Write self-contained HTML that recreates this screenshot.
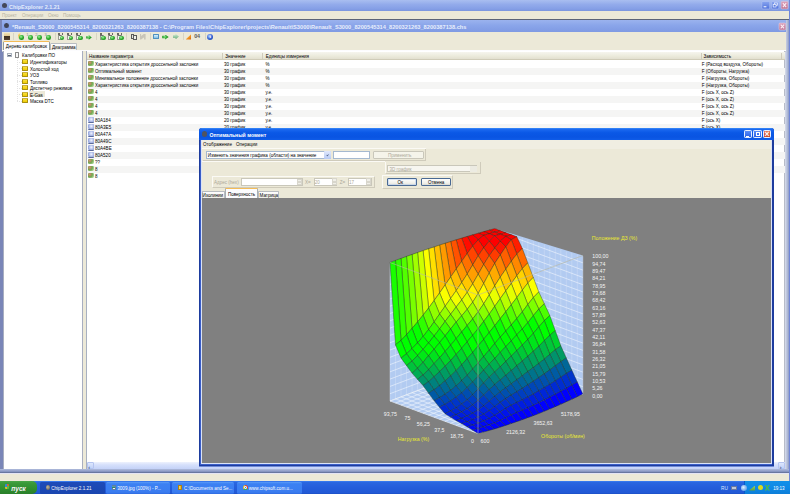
<!DOCTYPE html><html><head><meta charset="utf-8"><style>
html,body{margin:0;padding:0;}
body{width:790px;height:494px;overflow:hidden;position:relative;background:#ece9d8;font-family:"Liberation Sans",sans-serif;}
.t{position:absolute;white-space:pre;font-family:"Liberation Sans",sans-serif;}
div{box-sizing:border-box;}
</style></head><body>
<div style="position:absolute;left:0px;top:0px;width:790px;height:11px;background:linear-gradient(#a9bef0 0%,#93abeb 40%,#859fe6 80%,#7b96df 100%);"></div>
<div style="position:absolute;left:2px;top:3px;width:5px;height:5px;background:#44485a;border-radius:50%;"></div>
<div class="t" style="left:9px;top:3.53px;font-size:5.45px;line-height:6.54px;color:#e4ecfb;font-weight:bold;">ChipExplorer 2.1.21</div>
<svg style="position:absolute;left:0;top:0" width="790" height="40"><defs><linearGradient id="tb1" x1="0" y1="0" x2="0" y2="1"><stop offset="0" stop-color="#8aa6f0"/><stop offset="1" stop-color="#4f72dc"/></linearGradient><linearGradient id="tb2" x1="0" y1="0" x2="0" y2="1"><stop offset="0" stop-color="#dca2bc"/><stop offset="1" stop-color="#bf7494"/></linearGradient></defs><rect x="761.9" y="1.4" width="7.8" height="7.5" rx="1" fill="url(#tb1)" stroke="#b8c8f4" stroke-width="0.5"/><rect x="763.6" y="6.2" width="2.8" height="1.1" fill="#f0f4ff"/><rect x="771.7" y="1.4" width="7.2" height="7.5" rx="1" fill="url(#tb1)" stroke="#b8c8f4" stroke-width="0.5"/><rect x="774.6" y="2.9" width="2.8" height="2.4" fill="none" stroke="#f0f4ff" stroke-width="0.7"/><rect x="773.2" y="4.4" width="2.8" height="2.6" fill="#5a7ce0" stroke="#f0f4ff" stroke-width="0.7"/><rect x="781.1" y="1.4" width="6.9" height="7.5" rx="1" fill="url(#tb2)" stroke="#e4ccd8" stroke-width="0.5"/><path d="M782.9 3.2L786.2 7.1M786.2 3.2L782.9 7.1" stroke="#fbeef4" stroke-width="1.1"/></svg>
<div style="position:absolute;left:789px;top:0px;width:1px;height:494px;background:#6f86d8;"></div>
<div style="position:absolute;left:0px;top:11px;width:789px;height:7.6px;background:#ece9d8;"></div>
<div class="t" style="left:1.9px;top:12.87px;font-size:4.55px;line-height:5.46px;color:#b6b2a0;">Проект</div>
<div class="t" style="left:22px;top:12.87px;font-size:4.55px;line-height:5.46px;color:#b6b2a0;">Операции</div>
<div class="t" style="left:48px;top:12.87px;font-size:4.55px;line-height:5.46px;color:#b6b2a0;">Окно</div>
<div class="t" style="left:63px;top:12.87px;font-size:4.55px;line-height:5.46px;color:#b6b2a0;">Помощь</div>
<div style="position:absolute;left:0px;top:18.5px;width:789px;height:1.2px;background:#5c6478;"></div>
<div style="position:absolute;left:0px;top:19.6px;width:2.6px;height:454px;background:#7a86b8;"></div>
<div style="position:absolute;left:2.6px;top:51px;width:0.8px;height:418px;background:#dfe3f2;"></div>
<div style="position:absolute;left:785px;top:19.6px;width:4px;height:454px;background:linear-gradient(90deg,#d8deec,#b0bad6 60%,#8e9ac4);"></div>
<div style="position:absolute;left:2px;top:19.6px;width:784px;height:12px;background:linear-gradient(#9bb3ee 0%,#8aa5ea 45%,#7f9ae3 100%);"></div>
<div style="position:absolute;left:4.2px;top:22.6px;width:5px;height:5.5px;background:#404456;border-radius:50%;"></div>
<div class="t" style="left:12px;top:24.45px;font-size:5.66px;line-height:6.79px;color:#e8eefc;font-weight:bold;">*Renault_S3000_8200545314_8200321263_8200387138 - C:\Program Files\ChipExplorer\projects\Renault\S3000\Renault_S3000_8200545314_8200321263_8200387138.chs</div>
<svg style="position:absolute;left:0;top:0" width="790" height="40"><defs><linearGradient id="tb3" x1="0" y1="0" x2="0" y2="1"><stop offset="0" stop-color="#dca2bc"/><stop offset="1" stop-color="#bf7494"/></linearGradient></defs><rect x="779" y="23" width="6.8" height="7" rx="1" fill="url(#tb3)" stroke="#e8d4e0" stroke-width="0.5"/><path d="M780.7 24.7L784.1 28.3M784.1 24.7L780.7 28.3" stroke="#fbeef4" stroke-width="1.1"/></svg>
<div style="position:absolute;left:2px;top:31.6px;width:784px;height:9px;background:#ece9d8;"></div>
<div style="position:absolute;left:2px;top:40.6px;width:784px;height:10px;background:#ece9d8;"></div>
<div style="position:absolute;left:4.4px;top:33.4px;width:5.8px;height:6.4px;background:linear-gradient(#f2e2b0 0,#e0c890 45%,#3e3020 46%,#54402c 100%);border-radius:0.6px;"></div>
<div style="position:absolute;left:12.8px;top:33.2px;width:0.6px;height:6.6px;background:#d8d4c4;"></div>
<div style="position:absolute;left:17.6px;top:33.4px;width:3.2px;height:5.5px;background:linear-gradient(#ffe070,#e0a020);clip-path:polygon(40% 0,100% 0,60% 45%,90% 45%,10% 100%,40% 55%,0 55%);"></div>
<div style="position:absolute;left:19.2px;top:35.4px;width:4.4px;height:4.4px;background:radial-gradient(circle at 40% 35%,#a0f0a0 0,#30b030 45%,#187818 100%);border-radius:50%;"></div>
<div class="t" style="left:26.3px;top:32.4px;font:4px/5px 'Liberation Sans';color:#8a8a80;">1</div>
<div style="position:absolute;left:28.1px;top:35.2px;width:4.6px;height:4.6px;background:radial-gradient(circle at 40% 35%,#a0f0a0 0,#30b030 45%,#187818 100%);border-radius:50%;"></div>
<div class="t" style="left:35.3px;top:32.4px;font:4px/5px 'Liberation Sans';color:#8a8a80;">2</div>
<div style="position:absolute;left:37.099999999999994px;top:35.2px;width:4.6px;height:4.6px;background:radial-gradient(circle at 40% 35%,#a0f0a0 0,#30b030 45%,#187818 100%);border-radius:50%;"></div>
<div class="t" style="left:44.6px;top:32.4px;font:4px/5px 'Liberation Sans';color:#8a8a80;">3</div>
<div style="position:absolute;left:46.4px;top:35.2px;width:4.6px;height:4.6px;background:radial-gradient(circle at 40% 35%,#a0f0a0 0,#30b030 45%,#187818 100%);border-radius:50%;"></div>
<div style="position:absolute;left:54.6px;top:33.2px;width:0.6px;height:6.6px;background:#d8d4c4;"></div>
<div style="position:absolute;left:58px;top:33.3px;width:4.6px;height:1.8px;background:repeating-linear-gradient(90deg,#6a6a60 0 0.7px,transparent 0.7px 1.3px);"></div>
<div style="position:absolute;left:58px;top:34.6px;width:4.2px;height:5.2px;background:#f4f4f0;border:0.5px solid #9a9a90;"></div>
<div style="position:absolute;left:58.8px;top:35.2px;width:2.6px;height:0.5px;background:#707070;"></div>
<div style="position:absolute;left:59.8px;top:35.6px;width:4.6px;height:4.6px;background:radial-gradient(circle at 40% 35%,#a0f0a0 0,#30b030 45%,#187818 100%);border-radius:50%;"></div>
<div style="position:absolute;left:67px;top:33.3px;width:4.6px;height:1.8px;background:repeating-linear-gradient(90deg,#6a6a60 0 0.7px,transparent 0.7px 1.3px);"></div>
<div style="position:absolute;left:67px;top:34.6px;width:4.2px;height:5.2px;background:#f4f4f0;border:0.5px solid #9a9a90;"></div>
<div style="position:absolute;left:67.8px;top:35.2px;width:2.6px;height:0.5px;background:#707070;"></div>
<div style="position:absolute;left:68.8px;top:35.6px;width:4.6px;height:4.6px;background:radial-gradient(circle at 40% 35%,#a0f0a0 0,#30b030 45%,#187818 100%);border-radius:50%;"></div>
<div style="position:absolute;left:76.3px;top:33.3px;width:4.6px;height:1.8px;background:repeating-linear-gradient(90deg,#6a6a60 0 0.7px,transparent 0.7px 1.3px);"></div>
<div style="position:absolute;left:76.3px;top:34.6px;width:4.2px;height:5.2px;background:#f4f4f0;border:0.5px solid #9a9a90;"></div>
<div style="position:absolute;left:77.1px;top:35.2px;width:2.6px;height:0.5px;background:#707070;"></div>
<div style="position:absolute;left:78.1px;top:35.6px;width:4.6px;height:4.6px;background:radial-gradient(circle at 40% 35%,#a0f0a0 0,#30b030 45%,#187818 100%);border-radius:50%;"></div>
<div style="position:absolute;left:86.2px;top:35px;width:5.6px;height:4.8px;background:radial-gradient(circle at 40% 35%,#8ee08a 0,#2aa52e 40%,#157a1c 100%);clip-path:polygon(0 25%,45% 25%,45% 0,100% 50%,45% 100%,45% 75%,0 75%);border-radius:1px;"></div>
<div style="position:absolute;left:96px;top:33.2px;width:0.6px;height:6.6px;background:#d8d4c4;"></div>
<div style="position:absolute;left:99.5px;top:33.3px;width:4.6px;height:1.8px;background:repeating-linear-gradient(90deg,#6a6a60 0 0.7px,transparent 0.7px 1.3px);"></div>
<div style="position:absolute;left:99.5px;top:34.6px;width:4.2px;height:5.2px;background:#f4f4f0;border:0.5px solid #9a9a90;"></div>
<div style="position:absolute;left:100.3px;top:35.2px;width:2.6px;height:0.5px;background:#707070;"></div>
<div style="position:absolute;left:101.3px;top:35.6px;width:4.6px;height:4.6px;background:radial-gradient(circle at 40% 35%,#a0f0a0 0,#30b030 45%,#187818 100%);border-radius:50%;"></div>
<div style="position:absolute;left:108.3px;top:33.3px;width:4.6px;height:1.8px;background:repeating-linear-gradient(90deg,#6a6a60 0 0.7px,transparent 0.7px 1.3px);"></div>
<div style="position:absolute;left:108.3px;top:34.6px;width:4.2px;height:5.2px;background:#f4f4f0;border:0.5px solid #9a9a90;"></div>
<div style="position:absolute;left:109.1px;top:35.2px;width:2.6px;height:0.5px;background:#707070;"></div>
<div style="position:absolute;left:110.1px;top:35.6px;width:4.6px;height:4.6px;background:radial-gradient(circle at 40% 35%,#a0f0a0 0,#30b030 45%,#187818 100%);border-radius:50%;"></div>
<div style="position:absolute;left:117.4px;top:33.3px;width:4.6px;height:1.8px;background:repeating-linear-gradient(90deg,#6a6a60 0 0.7px,transparent 0.7px 1.3px);"></div>
<div style="position:absolute;left:117.4px;top:34.6px;width:4.2px;height:5.2px;background:#f4f4f0;border:0.5px solid #9a9a90;"></div>
<div style="position:absolute;left:118.2px;top:35.2px;width:2.6px;height:0.5px;background:#707070;"></div>
<div style="position:absolute;left:119.2px;top:35.6px;width:4.6px;height:4.6px;background:radial-gradient(circle at 40% 35%,#a0f0a0 0,#30b030 45%,#187818 100%);border-radius:50%;"></div>
<div style="position:absolute;left:126.2px;top:33.2px;width:0.6px;height:6.6px;background:#d8d4c4;"></div>
<div style="position:absolute;left:130.5px;top:33.6px;width:3.6px;height:5px;border:0.8px solid #5a5a5a;background:#e8e8e0;"></div>
<div style="position:absolute;left:133px;top:35.2px;width:3.6px;height:4.8px;border:0.8px solid #5a5a5a;background:#f0f0ea;"></div>
<div style="position:absolute;left:139.6px;top:33.8px;width:6px;height:5.8px;background:#c8c4b8;clip-path:polygon(0 0,25% 0,25% 40%,75% 0,100% 0,100% 100%,75% 100%,75% 60%,25% 100%,0 100%);"></div>
<div style="position:absolute;left:149.6px;top:33.2px;width:0.6px;height:6.6px;background:#d8d4c4;"></div>
<div style="position:absolute;left:152.5px;top:33.8px;width:6.4px;height:5.6px;background:linear-gradient(#d8f0fc,#80c0e8);border:0.5px solid #5090c0;border-radius:0.5px;"></div>
<div style="position:absolute;left:162.2px;top:34.6px;width:6.5px;height:5px;background:radial-gradient(circle at 40% 35%,#8ee08a 0,#2aa52e 40%,#157a1c 100%);clip-path:polygon(0 25%,45% 25%,45% 0,100% 50%,45% 100%,45% 75%,0 75%);border-radius:1px;"></div>
<div style="position:absolute;left:172.6px;top:33.8px;width:6.4px;height:5.6px;background:linear-gradient(#c8e8d0,#70b080);clip-path:polygon(0 25%,45% 25%,45% 0,100% 50%,45% 100%,45% 75%,0 75%);"></div>
<div style="position:absolute;left:183.2px;top:33.2px;width:0.6px;height:6.6px;background:#d8d4c4;"></div>
<div style="position:absolute;left:185.6px;top:34px;width:5.8px;height:5.6px;background:linear-gradient(135deg,#ffe080,#f09020 60%,#d06010);clip-path:polygon(100% 0,100% 100%,0 100%);"></div>
<div class="t" style="left:194.2px;top:33.2px;font:bold 5.4px/6.5px 'Liberation Sans';color:#5a5a58;letter-spacing:-0.3px;">04</div>
<div style="position:absolute;left:204.6px;top:33.2px;width:0.6px;height:6.6px;background:#d8d4c4;"></div>
<div style="position:absolute;left:207.2px;top:33.8px;width:6.2px;height:6.2px;background:radial-gradient(circle at 40% 35%,#b0c8ff,#3060d0 55%,#1840a0);border-radius:50%;"></div>
<div class="t" style="left:207.2px;top:33.7px;width:6.2px;text-align:center;font:bold 5px/6px 'Liberation Serif';color:#fff;">i</div>
<div style="position:absolute;left:2.5px;top:41px;width:47.5px;height:10px;background:#fcfcfe;border:0.6px solid #919b9c;border-bottom:none;border-top:1.2px solid #f4bc58;border-radius:1.5px 1.5px 0 0;"></div>
<div class="t" style="left:5.8px;top:43.87px;font-size:4.55px;line-height:5.46px;color:#000;">Дерево калибровок</div>
<div style="position:absolute;left:49.8px;top:43px;width:27.5px;height:7.6px;background:linear-gradient(#fefefe,#f0efe8);border:0.5px solid #b8bcc0;border-bottom:none;border-radius:1.5px 1.5px 0 0;"></div>
<div class="t" style="left:52px;top:45.27px;font-size:4.55px;line-height:5.46px;color:#000;">Диаграмма</div>
<div style="position:absolute;left:2.2px;top:49.9px;width:783.8px;height:1.3px;background:#fcfcfe;"></div>
<div style="position:absolute;left:2.2px;top:51.2px;width:783.8px;height:0.5px;background:#c8ccd0;"></div>
<div style="position:absolute;left:3.4px;top:51.2px;width:79.6px;height:418px;background:#fff;border-left:0.6px solid #a8aec0;border-right:0.6px solid #a8aec0;"></div>
<div style="position:absolute;left:83px;top:51.2px;width:3px;height:418px;background:#ece9d8;"></div>
<div style="position:absolute;left:7.4px;top:53px;width:4.2px;height:4.2px;background:#f4f4f2;border:0.5px solid #a8b0bc;"></div>
<div style="position:absolute;left:8.4px;top:54.9px;width:2.2px;height:0.55px;background:#5a6478;"></div>
<div style="position:absolute;left:15px;top:52px;width:4.2px;height:6px;background:#f8f8f8;border:0.7px solid #8a8a8a;border-radius:0.5px;"></div>
<div class="t" style="left:22px;top:53.27px;font-size:4.55px;line-height:5.46px;color:#000;">Калибровки ПО</div>
<div style="position:absolute;left:17px;top:58px;width:0;height:43px;border-left:0.6px dotted #e2e2e2;"></div>
<div style="position:absolute;left:17px;top:61.80px;width:5px;height:0;border-top:0.6px dotted #e2e2e2;"></div>
<div style="position:absolute;left:21.9px;top:59.3px;width:6.6px;height:4.9px;background:linear-gradient(#f8e040,#f0cc00);border:0.55px solid #a89010;border-top-color:#c8b040;border-radius:0.8px;"></div>
<div class="t" style="left:30px;top:60.07px;font-size:4.55px;line-height:5.46px;color:#000;">Идентификаторы</div>
<div style="position:absolute;left:17px;top:68.33px;width:5px;height:0;border-top:0.6px dotted #e2e2e2;"></div>
<div style="position:absolute;left:21.9px;top:65.83px;width:6.6px;height:4.9px;background:linear-gradient(#f8e040,#f0cc00);border:0.55px solid #a89010;border-top-color:#c8b040;border-radius:0.8px;"></div>
<div class="t" style="left:30px;top:66.60px;font-size:4.55px;line-height:5.46px;color:#000;">Холостой ход</div>
<div style="position:absolute;left:17px;top:74.86px;width:5px;height:0;border-top:0.6px dotted #e2e2e2;"></div>
<div style="position:absolute;left:21.9px;top:72.36px;width:6.6px;height:4.9px;background:linear-gradient(#f8e040,#f0cc00);border:0.55px solid #a89010;border-top-color:#c8b040;border-radius:0.8px;"></div>
<div class="t" style="left:30px;top:73.13px;font-size:4.55px;line-height:5.46px;color:#000;">УОЗ</div>
<div style="position:absolute;left:17px;top:81.39px;width:5px;height:0;border-top:0.6px dotted #e2e2e2;"></div>
<div style="position:absolute;left:21.9px;top:78.89px;width:6.6px;height:4.9px;background:linear-gradient(#f8e040,#f0cc00);border:0.55px solid #a89010;border-top-color:#c8b040;border-radius:0.8px;"></div>
<div class="t" style="left:30px;top:79.66px;font-size:4.55px;line-height:5.46px;color:#000;">Топливо</div>
<div style="position:absolute;left:17px;top:87.92px;width:5px;height:0;border-top:0.6px dotted #e2e2e2;"></div>
<div style="position:absolute;left:21.9px;top:85.42px;width:6.6px;height:4.9px;background:linear-gradient(#f8e040,#f0cc00);border:0.55px solid #a89010;border-top-color:#c8b040;border-radius:0.8px;"></div>
<div class="t" style="left:30px;top:86.19px;font-size:4.55px;line-height:5.46px;color:#000;">Диспетчер режимов</div>
<div style="position:absolute;left:17px;top:94.45px;width:5px;height:0;border-top:0.6px dotted #e2e2e2;"></div>
<div style="position:absolute;left:21.9px;top:91.94999999999999px;width:6.6px;height:4.9px;background:linear-gradient(#f8e040,#f0cc00);border:0.55px solid #a89010;border-top-color:#c8b040;border-radius:0.8px;"></div>
<div style="position:absolute;left:29.2px;top:91.44999999999999px;width:15.5px;height:6px;background:#ece9d8;"></div>
<div class="t" style="left:30px;top:92.72px;font-size:4.55px;line-height:5.46px;color:#000;">E-Gas</div>
<div style="position:absolute;left:17px;top:100.98px;width:5px;height:0;border-top:0.6px dotted #e2e2e2;"></div>
<div style="position:absolute;left:21.9px;top:98.47999999999999px;width:6.6px;height:4.9px;background:linear-gradient(#f8e040,#f0cc00);border:0.55px solid #a89010;border-top-color:#c8b040;border-radius:0.8px;"></div>
<div class="t" style="left:30px;top:99.25px;font-size:4.55px;line-height:5.46px;color:#000;">Маска DTC</div>
<div style="position:absolute;left:86px;top:51.2px;width:699px;height:418px;background:#fff;border-left:0.6px solid #a8b0c0;border-right:0.6px solid #b8bcc8;"></div>
<div style="position:absolute;left:86.6px;top:52px;width:698px;height:7.6px;background:linear-gradient(#f6f5ee,#ebeadb 60%,#e2dfcf);border-bottom:0.8px solid #d0ccb8;"></div>
<div style="position:absolute;left:221.5px;top:53px;width:0.7px;height:5.5px;background:#cfcbbb;"></div>
<div style="position:absolute;left:262px;top:53px;width:0.7px;height:5.5px;background:#cfcbbb;"></div>
<div style="position:absolute;left:700.7px;top:53px;width:0.7px;height:5.5px;background:#cfcbbb;"></div>
<div style="position:absolute;left:781.4px;top:53px;width:0.7px;height:5.5px;background:#cfcbbb;"></div>
<div class="t" style="left:88.9px;top:54.27px;font-size:4.55px;line-height:5.46px;color:#000;">Название параметра</div>
<div class="t" style="left:225.3px;top:54.27px;font-size:4.55px;line-height:5.46px;color:#000;">Значение</div>
<div class="t" style="left:265.8px;top:54.27px;font-size:4.55px;line-height:5.46px;color:#000;">Единицы измерения</div>
<div class="t" style="left:703.6px;top:54.27px;font-size:4.55px;line-height:5.46px;color:#000;">Зависимость</div>
<div style="position:absolute;left:88.2px;top:61.3px;width:5.6px;height:5.2px;background:radial-gradient(circle at 30% 30%,#d0a070 0,#b09060 20%,#70a850 45%,#a8d090 75%,rgba(240,248,240,0.6) 100%);border-radius:1px;"></div>
<div class="t" style="left:95px;top:62.27px;font-size:4.55px;line-height:5.46px;color:#000;">Характеристика открытия дроссельной заслонки</div>
<div class="t" style="left:224px;top:62.27px;font-size:4.55px;line-height:5.46px;color:#000;">30 график</div>
<div class="t" style="left:265.5px;top:62.27px;font-size:4.55px;line-height:5.46px;color:#000;">%</div>
<div class="t" style="left:701.7px;top:62.27px;font-size:4.55px;line-height:5.46px;color:#000;">F (Расход воздуха, Обороты)</div>
<div style="position:absolute;left:86.6px;top:67.5px;width:698px;height:7.0px;background:#f5f5f4;"></div>
<div style="position:absolute;left:88.2px;top:68.3px;width:5.6px;height:5.2px;background:radial-gradient(circle at 30% 30%,#d0a070 0,#b09060 20%,#70a850 45%,#a8d090 75%,rgba(240,248,240,0.6) 100%);border-radius:1px;"></div>
<div class="t" style="left:95px;top:69.27px;font-size:4.55px;line-height:5.46px;color:#000;">Оптимальный момент</div>
<div class="t" style="left:224px;top:69.27px;font-size:4.55px;line-height:5.46px;color:#000;">30 график</div>
<div class="t" style="left:265.5px;top:69.27px;font-size:4.55px;line-height:5.46px;color:#000;">%</div>
<div class="t" style="left:701.7px;top:69.27px;font-size:4.55px;line-height:5.46px;color:#000;">F (Обороты, Нагрузка)</div>
<div style="position:absolute;left:88.2px;top:75.3px;width:5.6px;height:5.2px;background:radial-gradient(circle at 30% 30%,#d0a070 0,#b09060 20%,#70a850 45%,#a8d090 75%,rgba(240,248,240,0.6) 100%);border-radius:1px;"></div>
<div class="t" style="left:95px;top:76.27px;font-size:4.55px;line-height:5.46px;color:#000;">Минимальное положение дроссельной заслонки</div>
<div class="t" style="left:224px;top:76.27px;font-size:4.55px;line-height:5.46px;color:#000;">30 график</div>
<div class="t" style="left:265.5px;top:76.27px;font-size:4.55px;line-height:5.46px;color:#000;">%</div>
<div class="t" style="left:701.7px;top:76.27px;font-size:4.55px;line-height:5.46px;color:#000;">F (Нагрузка, Обороты)</div>
<div style="position:absolute;left:86.6px;top:81.5px;width:698px;height:7.0px;background:#f5f5f4;"></div>
<div style="position:absolute;left:88.2px;top:82.3px;width:5.6px;height:5.2px;background:radial-gradient(circle at 30% 30%,#d0a070 0,#b09060 20%,#70a850 45%,#a8d090 75%,rgba(240,248,240,0.6) 100%);border-radius:1px;"></div>
<div class="t" style="left:95px;top:83.27px;font-size:4.55px;line-height:5.46px;color:#000;">Характеристика открытия дроссельной заслонки</div>
<div class="t" style="left:224px;top:83.27px;font-size:4.55px;line-height:5.46px;color:#000;">30 график</div>
<div class="t" style="left:265.5px;top:83.27px;font-size:4.55px;line-height:5.46px;color:#000;">%</div>
<div class="t" style="left:701.7px;top:83.27px;font-size:4.55px;line-height:5.46px;color:#000;">F (Нагрузка, Обороты)</div>
<div style="position:absolute;left:88.2px;top:89.3px;width:5.6px;height:5.2px;background:radial-gradient(circle at 30% 30%,#d0a070 0,#b09060 20%,#70a850 45%,#a8d090 75%,rgba(240,248,240,0.6) 100%);border-radius:1px;"></div>
<div class="t" style="left:95px;top:90.27px;font-size:4.55px;line-height:5.46px;color:#000;">4</div>
<div class="t" style="left:224px;top:90.27px;font-size:4.55px;line-height:5.46px;color:#000;">30 график</div>
<div class="t" style="left:265.5px;top:90.27px;font-size:4.55px;line-height:5.46px;color:#000;">у.е.</div>
<div class="t" style="left:701.7px;top:90.27px;font-size:4.55px;line-height:5.46px;color:#000;">F (ось X, ось Z)</div>
<div style="position:absolute;left:86.6px;top:95.5px;width:698px;height:7.0px;background:#f5f5f4;"></div>
<div style="position:absolute;left:88.2px;top:96.3px;width:5.6px;height:5.2px;background:radial-gradient(circle at 30% 30%,#d0a070 0,#b09060 20%,#70a850 45%,#a8d090 75%,rgba(240,248,240,0.6) 100%);border-radius:1px;"></div>
<div class="t" style="left:95px;top:97.27px;font-size:4.55px;line-height:5.46px;color:#000;">4</div>
<div class="t" style="left:224px;top:97.27px;font-size:4.55px;line-height:5.46px;color:#000;">30 график</div>
<div class="t" style="left:265.5px;top:97.27px;font-size:4.55px;line-height:5.46px;color:#000;">у.е.</div>
<div class="t" style="left:701.7px;top:97.27px;font-size:4.55px;line-height:5.46px;color:#000;">F (ось X, ось Z)</div>
<div style="position:absolute;left:88.2px;top:103.3px;width:5.6px;height:5.2px;background:radial-gradient(circle at 30% 30%,#d0a070 0,#b09060 20%,#70a850 45%,#a8d090 75%,rgba(240,248,240,0.6) 100%);border-radius:1px;"></div>
<div class="t" style="left:95px;top:104.27px;font-size:4.55px;line-height:5.46px;color:#000;">4</div>
<div class="t" style="left:224px;top:104.27px;font-size:4.55px;line-height:5.46px;color:#000;">30 график</div>
<div class="t" style="left:265.5px;top:104.27px;font-size:4.55px;line-height:5.46px;color:#000;">у.е.</div>
<div class="t" style="left:701.7px;top:104.27px;font-size:4.55px;line-height:5.46px;color:#000;">F (ось X, ось Z)</div>
<div style="position:absolute;left:86.6px;top:109.5px;width:698px;height:7.0px;background:#f5f5f4;"></div>
<div style="position:absolute;left:88.2px;top:110.3px;width:5.6px;height:5.2px;background:radial-gradient(circle at 30% 30%,#d0a070 0,#b09060 20%,#70a850 45%,#a8d090 75%,rgba(240,248,240,0.6) 100%);border-radius:1px;"></div>
<div class="t" style="left:95px;top:111.27px;font-size:4.55px;line-height:5.46px;color:#000;">4</div>
<div class="t" style="left:224px;top:111.27px;font-size:4.55px;line-height:5.46px;color:#000;">30 график</div>
<div class="t" style="left:265.5px;top:111.27px;font-size:4.55px;line-height:5.46px;color:#000;">у.е.</div>
<div class="t" style="left:701.7px;top:111.27px;font-size:4.55px;line-height:5.46px;color:#000;">F (ось X, ось Z)</div>
<div style="position:absolute;left:88.2px;top:117.3px;width:5.6px;height:5.4px;background:radial-gradient(circle at 55% 45%,#f0f4ff 0,#b8c4ec 45%,#98a8dc 70%,rgba(220,228,248,0.8) 100%);border-radius:1px;border-bottom:0.6px solid #5a6a9a;"></div>
<div class="t" style="left:95px;top:118.27px;font-size:4.55px;line-height:5.46px;color:#000;">80A184</div>
<div class="t" style="left:224px;top:118.27px;font-size:4.55px;line-height:5.46px;color:#000;">20 график</div>
<div class="t" style="left:265.5px;top:118.27px;font-size:4.55px;line-height:5.46px;color:#000;">у.е.</div>
<div class="t" style="left:701.7px;top:118.27px;font-size:4.55px;line-height:5.46px;color:#000;">F (ось X)</div>
<div style="position:absolute;left:86.6px;top:123.5px;width:698px;height:7.0px;background:#f5f5f4;"></div>
<div style="position:absolute;left:88.2px;top:124.3px;width:5.6px;height:5.4px;background:radial-gradient(circle at 55% 45%,#f0f4ff 0,#b8c4ec 45%,#98a8dc 70%,rgba(220,228,248,0.8) 100%);border-radius:1px;border-bottom:0.6px solid #5a6a9a;"></div>
<div class="t" style="left:95px;top:125.27px;font-size:4.55px;line-height:5.46px;color:#000;">80A3E5</div>
<div class="t" style="left:224px;top:125.27px;font-size:4.55px;line-height:5.46px;color:#000;">20 график</div>
<div class="t" style="left:265.5px;top:125.27px;font-size:4.55px;line-height:5.46px;color:#000;">у.е.</div>
<div class="t" style="left:701.7px;top:125.27px;font-size:4.55px;line-height:5.46px;color:#000;">F (ось X)</div>
<div style="position:absolute;left:88.2px;top:131.3px;width:5.6px;height:5.4px;background:radial-gradient(circle at 55% 45%,#f0f4ff 0,#b8c4ec 45%,#98a8dc 70%,rgba(220,228,248,0.8) 100%);border-radius:1px;border-bottom:0.6px solid #5a6a9a;"></div>
<div class="t" style="left:95px;top:132.27px;font-size:4.55px;line-height:5.46px;color:#000;">80A47A</div>
<div class="t" style="left:224px;top:132.27px;font-size:4.55px;line-height:5.46px;color:#000;">20 график</div>
<div class="t" style="left:265.5px;top:132.27px;font-size:4.55px;line-height:5.46px;color:#000;">у.е.</div>
<div class="t" style="left:701.7px;top:132.27px;font-size:4.55px;line-height:5.46px;color:#000;">F (ось X)</div>
<div style="position:absolute;left:86.6px;top:137.5px;width:698px;height:7.0px;background:#f5f5f4;"></div>
<div style="position:absolute;left:88.2px;top:138.3px;width:5.6px;height:5.4px;background:radial-gradient(circle at 55% 45%,#f0f4ff 0,#b8c4ec 45%,#98a8dc 70%,rgba(220,228,248,0.8) 100%);border-radius:1px;border-bottom:0.6px solid #5a6a9a;"></div>
<div class="t" style="left:95px;top:139.27px;font-size:4.55px;line-height:5.46px;color:#000;">80A49C</div>
<div class="t" style="left:224px;top:139.27px;font-size:4.55px;line-height:5.46px;color:#000;">20 график</div>
<div class="t" style="left:265.5px;top:139.27px;font-size:4.55px;line-height:5.46px;color:#000;">у.е.</div>
<div class="t" style="left:701.7px;top:139.27px;font-size:4.55px;line-height:5.46px;color:#000;">F (ось X)</div>
<div style="position:absolute;left:88.2px;top:145.3px;width:5.6px;height:5.4px;background:radial-gradient(circle at 55% 45%,#f0f4ff 0,#b8c4ec 45%,#98a8dc 70%,rgba(220,228,248,0.8) 100%);border-radius:1px;border-bottom:0.6px solid #5a6a9a;"></div>
<div class="t" style="left:95px;top:146.27px;font-size:4.55px;line-height:5.46px;color:#000;">80A4BE</div>
<div class="t" style="left:224px;top:146.27px;font-size:4.55px;line-height:5.46px;color:#000;">20 график</div>
<div class="t" style="left:265.5px;top:146.27px;font-size:4.55px;line-height:5.46px;color:#000;">у.е.</div>
<div class="t" style="left:701.7px;top:146.27px;font-size:4.55px;line-height:5.46px;color:#000;">F (ось X)</div>
<div style="position:absolute;left:86.6px;top:151.5px;width:698px;height:7.0px;background:#f5f5f4;"></div>
<div style="position:absolute;left:88.2px;top:152.3px;width:5.6px;height:5.4px;background:radial-gradient(circle at 55% 45%,#f0f4ff 0,#b8c4ec 45%,#98a8dc 70%,rgba(220,228,248,0.8) 100%);border-radius:1px;border-bottom:0.6px solid #5a6a9a;"></div>
<div class="t" style="left:95px;top:153.27px;font-size:4.55px;line-height:5.46px;color:#000;">80A520</div>
<div class="t" style="left:224px;top:153.27px;font-size:4.55px;line-height:5.46px;color:#000;">20 график</div>
<div class="t" style="left:265.5px;top:153.27px;font-size:4.55px;line-height:5.46px;color:#000;">у.е.</div>
<div class="t" style="left:701.7px;top:153.27px;font-size:4.55px;line-height:5.46px;color:#000;">F (ось X)</div>
<div style="position:absolute;left:88.2px;top:159.3px;width:5.6px;height:5.2px;background:radial-gradient(circle at 30% 30%,#d0a070 0,#b09060 20%,#70a850 45%,#a8d090 75%,rgba(240,248,240,0.6) 100%);border-radius:1px;"></div>
<div class="t" style="left:95px;top:160.27px;font-size:4.55px;line-height:5.46px;color:#000;">??</div>
<div class="t" style="left:224px;top:160.27px;font-size:4.55px;line-height:5.46px;color:#000;">30 график</div>
<div class="t" style="left:265.5px;top:160.27px;font-size:4.55px;line-height:5.46px;color:#000;">у.е.</div>
<div class="t" style="left:701.7px;top:160.27px;font-size:4.55px;line-height:5.46px;color:#000;">F (ось X, ось Z)</div>
<div style="position:absolute;left:86.6px;top:165.5px;width:698px;height:7.0px;background:#f5f5f4;"></div>
<div style="position:absolute;left:88.2px;top:166.3px;width:5.6px;height:5.2px;background:radial-gradient(circle at 30% 30%,#d0a070 0,#b09060 20%,#70a850 45%,#a8d090 75%,rgba(240,248,240,0.6) 100%);border-radius:1px;"></div>
<div class="t" style="left:95px;top:167.27px;font-size:4.55px;line-height:5.46px;color:#000;">8</div>
<div class="t" style="left:224px;top:167.27px;font-size:4.55px;line-height:5.46px;color:#000;">30 график</div>
<div class="t" style="left:265.5px;top:167.27px;font-size:4.55px;line-height:5.46px;color:#000;">у.е.</div>
<div class="t" style="left:701.7px;top:167.27px;font-size:4.55px;line-height:5.46px;color:#000;">F (ось X, ось Z)</div>
<div style="position:absolute;left:88.2px;top:173.3px;width:5.6px;height:5.2px;background:radial-gradient(circle at 30% 30%,#d0a070 0,#b09060 20%,#70a850 45%,#a8d090 75%,rgba(240,248,240,0.6) 100%);border-radius:1px;"></div>
<div class="t" style="left:95px;top:174.27px;font-size:4.55px;line-height:5.46px;color:#000;">8</div>
<div class="t" style="left:224px;top:174.27px;font-size:4.55px;line-height:5.46px;color:#000;">30 график</div>
<div class="t" style="left:265.5px;top:174.27px;font-size:4.55px;line-height:5.46px;color:#000;">у.е.</div>
<div class="t" style="left:701.7px;top:174.27px;font-size:4.55px;line-height:5.46px;color:#000;">F (ось X, ось Z)</div>
<div style="position:absolute;left:86.6px;top:462.4px;width:698px;height:6.3px;background:linear-gradient(#eef2fd,#d6e0fb 40%,#c4d2f8 100%);"></div>
<div style="position:absolute;left:86.6px;top:462.4px;width:7.2px;height:6.3px;background:linear-gradient(#dde7fd,#c3d2f8);border:0.5px solid #b4c4f0;border-radius:1px;"></div>
<div class="t" style="left:88.2px;top:463.51px;font-size:5.5px;line-height:6.60px;color:#4d6185;font-weight:bold;">‹</div>
<div style="position:absolute;left:777.6px;top:462.4px;width:7.2px;height:6.3px;background:linear-gradient(#dde7fd,#c3d2f8);border:0.5px solid #b4c4f0;border-radius:1px;"></div>
<div class="t" style="left:779.8px;top:463.51px;font-size:5.5px;line-height:6.60px;color:#4d6185;font-weight:bold;">›</div>
<div style="position:absolute;left:0px;top:468.8px;width:789px;height:4px;background:linear-gradient(#b0bcdc,#8a98c4 60%,#5a6890);"></div>
<div style="position:absolute;left:0px;top:472.8px;width:789px;height:1px;background:#e4e4f4;"></div>
<div style="position:absolute;left:0px;top:473.7px;width:789px;height:7.5px;background:#ece9d8;"></div>
<div style="position:absolute;left:198.6px;top:127.8px;width:575.6px;height:338.90000000000003px;background:#6f8ad8;border-radius:3px 3px 0 0;"></div>
<div style="position:absolute;left:199.1px;top:127.8px;width:574.6px;height:338.3px;background:#1d3c9e;border-radius:3px 3px 0 0;"></div>
<div style="position:absolute;left:200.4px;top:132.8px;width:572.1px;height:332.0px;background:#3a5ec8;"></div>
<div style="position:absolute;left:201.2px;top:132.8px;width:570.5px;height:331.20000000000005px;background:#dbe3f6;"></div>
<div style="position:absolute;left:199px;top:127.8px;width:575px;height:12.2px;background:linear-gradient(#3d8ef8 0%,#1a68ef 12%,#0a58e6 40%,#0954e2 75%,#0f5ce8 100%);border-radius:3px 3px 0 0;"></div>
<div style="position:absolute;left:202px;top:140px;width:568.5px;height:323px;background:#ece9d8;"></div>
<div style="position:absolute;left:202.2px;top:131px;width:5px;height:5.5px;background:#505460;border-radius:50%;"></div>
<div class="t" style="left:209.4px;top:131.85px;font-size:5.14px;line-height:6.17px;color:#fff;font-weight:bold;">Оптимальный момент</div>
<div style="position:absolute;left:744px;top:130px;width:8.4px;height:8.4px;background:linear-gradient(#5a8ef8,#2a62e8);border:0.6px solid #e8f0ff;border-radius:1.2px;"></div>
<div style="position:absolute;left:753.3px;top:130px;width:8.4px;height:8.4px;background:linear-gradient(#5a8ef8,#2a62e8);border:0.6px solid #e8f0ff;border-radius:1.2px;"></div>
<div style="position:absolute;left:762.7px;top:130px;width:8.4px;height:8.4px;background:linear-gradient(#e8785a,#c84a2a);border:0.6px solid #e8f0ff;border-radius:1.2px;"></div>
<div style="position:absolute;left:746px;top:135.6px;width:3px;height:1.2px;background:#fff;"></div>
<div style="position:absolute;left:755.5px;top:132.3px;width:4.2px;height:3.8px;border:0.7px solid #fff;border-top-width:1.3px;"></div>
<div class="t" style="left:762.7px;top:128.8px;width:8.4px;text-align:center;font:bold 8.5px/10px 'Liberation Sans';color:#fff;">×</div>
<div style="position:absolute;left:202px;top:140px;width:568.5px;height:8.5px;background:#f0eee2;"></div>
<div class="t" style="left:203px;top:142.07px;font-size:4.55px;line-height:5.46px;color:#000;">Отображение</div>
<div class="t" style="left:236px;top:142.07px;font-size:4.55px;line-height:5.46px;color:#000;">Операции</div>
<div style="position:absolute;left:202px;top:148.3px;width:224px;height:0.7px;background:#fbfaf5;"></div>
<div style="position:absolute;left:203px;top:148.8px;width:223px;height:12.4px;border-right:0.7px solid #cfcbbb;border-bottom:0.7px solid #cfcbbb;"></div>
<div style="position:absolute;left:202px;top:161.3px;width:183px;height:0.7px;background:#fbfaf5;"></div>
<div style="position:absolute;left:206.2px;top:150.7px;width:125.3px;height:8.6px;background:#fff;border:0.5px solid #a5b9d0;"></div>
<div class="t" style="left:207.8px;top:153.27px;font-size:4.55px;line-height:5.46px;color:#000;">Изменить значения графика (области) на значение</div>
<div style="position:absolute;left:324px;top:151.3px;width:7px;height:7.4px;background:linear-gradient(#e0e8fc,#b8cbf4);border-radius:0.7px;"></div>
<div style="position:absolute;left:325.8px;top:153.5px;width:3.4px;height:2px;border-left:0.8px solid #4d6185;border-bottom:0.8px solid #4d6185;transform:rotate(-45deg) scale(0.7);"></div>
<div style="position:absolute;left:333.3px;top:150.8px;width:36.5px;height:8.4px;background:#fff;border:0.5px solid #a5b9d0;"></div>
<div style="position:absolute;left:372.5px;top:151.2px;width:51.3px;height:8px;background:#f5f4ea;border:0.6px solid #c9c7ba;border-radius:1px;"></div>
<div class="t" style="left:388px;top:153.37px;font-size:4.55px;line-height:5.46px;color:#aca899;">Применить</div>
<div style="position:absolute;left:385px;top:162.3px;width:96px;height:12.2px;border-right:0.7px solid #cfcbbb;border-bottom:0.7px solid #cfcbbb;border-left:0.7px solid #fbfaf5;"></div>
<div style="position:absolute;left:387px;top:164.9px;width:90.2px;height:7.2px;background:#f7f6f0;border:0.6px solid #c9c7ba;"></div>
<div class="t" style="left:389.5px;top:166.87px;font-size:4.55px;line-height:5.46px;color:#aca899;">3D график</div>
<div style="position:absolute;left:470px;top:165.5px;width:6.5px;height:6px;background:#ecebe2;"></div>
<div style="position:absolute;left:211.7px;top:175.8px;width:163px;height:12.4px;border-right:0.7px solid #cfcbbb;border-bottom:0.7px solid #cfcbbb;border-left:0.7px solid #fbfaf5;border-top:0.7px solid #fbfaf5;"></div>
<div class="t" style="left:214px;top:180.07px;font-size:4.55px;line-height:5.46px;color:#aca899;">Адрес (hex)</div>
<div style="position:absolute;left:241.3px;top:178px;width:61.6px;height:7.6px;background:#fff;border:0.6px solid #c9c7ba;"></div>
<div style="position:absolute;left:297px;top:178.6px;width:5.3px;height:3.2px;background:#f0efe8;border:0.4px solid #d8d6cc;"></div>
<div style="position:absolute;left:297px;top:181.8px;width:5.3px;height:3.2px;background:#f0efe8;border:0.4px solid #d8d6cc;"></div>
<div class="t" style="left:305px;top:180.07px;font-size:4.55px;line-height:5.46px;color:#aca899;">X=</div>
<div style="position:absolute;left:313.7px;top:177.6px;width:23.7px;height:8.1px;background:#fff;border:0.6px solid #c9c7ba;"></div>
<div class="t" style="left:314.8px;top:180.07px;font-size:4.55px;line-height:5.46px;color:#aca899;">20</div>
<div style="position:absolute;left:331.8px;top:178.2px;width:5px;height:3.4px;background:#f0efe8;border:0.4px solid #d8d6cc;"></div>
<div style="position:absolute;left:331.8px;top:181.7px;width:5px;height:3.4px;background:#f0efe8;border:0.4px solid #d8d6cc;"></div>
<div class="t" style="left:339.7px;top:180.07px;font-size:4.55px;line-height:5.46px;color:#aca899;">Z=</div>
<div style="position:absolute;left:347.9px;top:177.6px;width:23.7px;height:8.1px;background:#fff;border:0.6px solid #c9c7ba;"></div>
<div class="t" style="left:349px;top:180.07px;font-size:4.55px;line-height:5.46px;color:#aca899;">17</div>
<div style="position:absolute;left:366px;top:178.2px;width:5px;height:3.4px;background:#f0efe8;border:0.4px solid #d8d6cc;"></div>
<div style="position:absolute;left:366px;top:181.7px;width:5px;height:3.4px;background:#f0efe8;border:0.4px solid #d8d6cc;"></div>
<div style="position:absolute;left:382.3px;top:175.3px;width:71.2px;height:13.3px;border-right:0.7px solid #cfcbbb;border-bottom:0.7px solid #cfcbbb;border-left:0.7px solid #fbfaf5;border-top:0.7px solid #fbfaf5;"></div>
<div style="position:absolute;left:386.7px;top:178px;width:30.7px;height:7.5px;background:linear-gradient(#fefefe,#f0f0ea 70%,#d8d8d0);border:0.6px solid #4a6a94;border-radius:1px;box-shadow:inset 0 0 0 0.6px #b8d0f4;"></div>
<div class="t" style="left:397.5px;top:180.07px;font-size:4.55px;line-height:5.46px;color:#000;">Ок</div>
<div style="position:absolute;left:420.9px;top:178px;width:29.7px;height:7.5px;background:linear-gradient(#fefefe,#f0f0ea 70%,#d8d8d0);border:0.6px solid #4a6a94;border-radius:1px;"></div>
<div class="t" style="left:428px;top:180.07px;font-size:4.55px;line-height:5.46px;color:#000;">Отмена</div>
<div style="position:absolute;left:201.8px;top:191.2px;width:23.6px;height:7.2px;background:linear-gradient(#fefefe,#f0efe8);border:0.5px solid #b8bcc0;border-bottom:none;border-radius:1px 1px 0 0;"></div>
<div class="t" style="left:202.6px;top:193.17px;font-size:4.55px;line-height:5.46px;color:#000;">Изолинии</div>
<div style="position:absolute;left:225.4px;top:188.2px;width:32.6px;height:10.2px;background:#fcfcfe;border:0.5px solid #a8b0b4;border-bottom:none;border-top:1.2px solid #f4bc58;border-radius:1px 1px 0 0;"></div>
<div class="t" style="left:227.9px;top:191.87px;font-size:4.55px;line-height:5.46px;color:#000;">Поверхность</div>
<div style="position:absolute;left:258px;top:191.2px;width:20.8px;height:7.2px;background:linear-gradient(#fefefe,#f0efe8);border:0.5px solid #b8bcc0;border-bottom:none;border-radius:1px 1px 0 0;"></div>
<div class="t" style="left:259.6px;top:193.17px;font-size:4.55px;line-height:5.46px;color:#000;">Матрица</div>
<div style="position:absolute;left:202px;top:198.3px;width:568.6px;height:264.9px;background:#808080;"></div>
<div style="position:absolute;left:0px;top:481px;width:790px;height:13px;background:linear-gradient(#3c81f3 0%,#2a66e0 12%,#245edb 50%,#2259d6 90%,#1c4fc4 100%);"></div>
<div style="position:absolute;left:0px;top:481px;width:36.5px;height:13px;background:linear-gradient(#48a848 0%,#3a9a3a 15%,#2f8f2f 60%,#2a7f2a 100%);border-radius:0 5px 5px 0;"></div>
<div style="position:absolute;left:5px;top:484.2px;width:4.2px;height:5.2px;background:conic-gradient(#e86030 0 25%,#60c040 0 50%,#f0c030 0 75%,#3088e8 0);border-radius:1px;opacity:0.9;"></div>
<div class="t" style="left:11.2px;top:485.09px;font-size:6.6px;line-height:7.92px;color:#fff;font-weight:bold;font-style:italic;text-shadow:0.4px 0.4px 0.4px #1a5a1a;">пуск</div>
<div style="position:absolute;left:39.5px;top:482.2px;width:65.4px;height:11.5px;background:linear-gradient(#1e4bb8,#1a46b0);border-radius:1.5px;"></div>
<div class="t" style="left:51.3px;top:486.37px;font-size:4.55px;line-height:5.46px;color:#fff;">ChipExplorer 2.1.21</div>
<div style="position:absolute;left:105.5px;top:482.2px;width:64.19999999999999px;height:11.5px;background:linear-gradient(#5a9af8 0%,#3c81f3 15%,#3a7cf0 85%,#2e6ae0 100%);border-radius:1.5px;"></div>
<div class="t" style="left:117.3px;top:486.37px;font-size:4.55px;line-height:5.46px;color:#fff;">3009.jpg (100%) - P...</div>
<div style="position:absolute;left:172.3px;top:482.2px;width:62.0px;height:11.5px;background:linear-gradient(#5a9af8 0%,#3c81f3 15%,#3a7cf0 85%,#2e6ae0 100%);border-radius:1.5px;"></div>
<div class="t" style="left:184.10000000000002px;top:486.37px;font-size:4.55px;line-height:5.46px;color:#fff;">C:\Documents and Se...</div>
<div style="position:absolute;left:237px;top:482.2px;width:65px;height:11.5px;background:linear-gradient(#5a9af8 0%,#3c81f3 15%,#3a7cf0 85%,#2e6ae0 100%);border-radius:1.5px;"></div>
<div class="t" style="left:248.8px;top:486.37px;font-size:4.55px;line-height:5.46px;color:#fff;">www.chipsoft.com.u...</div>
<div style="position:absolute;left:45.5px;top:485px;width:4.2px;height:4.6px;background:radial-gradient(circle at 40% 40%,#c0b8a0,#585048);border-radius:50%;"></div>
<div style="position:absolute;left:111.5px;top:484.6px;width:4.6px;height:5.4px;background:#f4f4f4;border:0.5px solid #6080a0;"></div>
<div style="position:absolute;left:112.3px;top:485.6px;width:3px;height:2.6px;background:linear-gradient(#60a0e0,#308030);"></div>
<div style="position:absolute;left:177.6px;top:484.6px;width:4.6px;height:5.6px;background:linear-gradient(90deg,#f8e070,#e0b020);border:0.4px solid #b08010;"></div>
<div style="position:absolute;left:243px;top:485px;width:5px;height:5px;background:conic-gradient(#e04030 0 33%,#40b040 0 66%,#f0c020 0);border-radius:50%;"></div>
<div style="position:absolute;left:244.4px;top:486.4px;width:2.2px;height:2.2px;background:#3c80e8;border:0.4px solid #fff;border-radius:50%;"></div>
<div style="position:absolute;left:744.4px;top:481px;width:45.6px;height:13px;background:linear-gradient(#1290e8 0%,#0f8ae6 50%,#0d7ed8 100%);border-left:0.7px solid #095bc9;"></div>
<div class="t" style="left:721px;top:486.18px;font-size:4.8px;line-height:5.76px;color:#dce8ff;">RU</div>
<div style="position:absolute;left:730.5px;top:486.2px;width:6px;height:3.5px;background:#c0c8d8;border:0.4px solid #6878a0;"></div>
<div style="position:absolute;left:741px;top:485px;width:5.5px;height:5.5px;background:radial-gradient(circle at 40% 40%,#e0f0ff,#3080e0);border-radius:50%;"></div>
<div style="position:absolute;left:749px;top:485.5px;width:6px;height:5px;background:linear-gradient(#90d060,#60a030);clip-path:polygon(100% 0,100% 100%,0 100%);"></div>
<div style="position:absolute;left:757.5px;top:485px;width:5px;height:5px;background:#d8d820;border-radius:50%;"></div>
<div style="position:absolute;left:764.8px;top:485px;width:5px;height:5.5px;background:#50c040;clip-path:polygon(0 0,30% 0,50% 35%,70% 0,100% 0,65% 50%,100% 100%,70% 100%,50% 65%,30% 100%,0 100%,35% 50%);"></div>
<div class="t" style="left:773.2px;top:485.87px;font-size:4.55px;line-height:5.46px;color:#fff;">19:13</div>
<svg style="position:absolute;left:0;top:0" width="790" height="494" viewBox="0 0 790 494">
<defs><clipPath id="ca"><rect x="202" y="198.3" width="568.5" height="264.8"/></clipPath></defs><g clip-path="url(#ca)">
<polygon points="390.0,401.0 494.8,361.5 494.8,228.5 390.0,262.5" fill="#b2cbf1"/>
<polygon points="494.8,361.5 582.8,394.0 582.8,255.5 494.8,228.5" fill="#b2cbf1"/>
<polygon points="478.0,433.5 390.0,401.0 494.8,361.5 582.8,394.0" fill="#b2cbf1"/>
<path d="M390.0,401.0L390.0,263.3 M395.5,398.9L395.5,261.3 M401.0,396.8L401.0,259.2 M406.5,394.8L406.5,257.2 M412.1,392.7L412.1,255.3 M417.6,390.6L417.6,253.3 M423.1,388.5L423.1,251.4 M428.6,386.4L428.6,249.5 M434.1,384.4L434.1,247.7 M439.6,382.3L439.6,245.9 M445.2,380.2L445.2,244.1 M450.7,378.1L450.7,242.3 M456.2,376.1L456.2,240.6 M461.7,374.0L461.7,238.9 M467.2,371.9L467.2,237.2 M472.7,369.8L472.7,235.6 M478.3,367.7L478.3,234.0 M483.8,365.7L483.8,232.4 M489.3,363.6L489.3,230.9 M494.8,361.5L494.8,229.4 M582.8,394.0L582.8,256.3 M577.3,392.0L577.3,254.6 M571.8,389.9L571.8,253.0 M566.3,387.9L566.3,251.3 M560.8,385.9L560.8,249.6 M555.3,383.8L555.3,247.9 M549.8,381.8L549.8,246.2 M544.3,379.8L544.3,244.5 M538.8,377.8L538.8,242.9 M533.3,375.7L533.3,241.2 M527.8,373.7L527.8,239.5 M522.3,371.7L522.3,237.8 M516.8,369.6L516.8,236.1 M511.3,367.6L511.3,234.4 M505.8,365.6L505.8,232.7 M500.3,363.5L500.3,231.1 M494.8,361.5L494.8,229.4" stroke="#d4e2f8" stroke-width="0.45" fill="none"/>
<path d="M390.0,401.0L494.8,361.5L582.8,394.0 M390.0,393.7L494.8,354.2L582.8,386.7 M390.0,386.4L494.8,346.9L582.8,379.4 M390.0,379.1L494.8,339.6L582.8,372.1 M390.0,371.8L494.8,332.3L582.8,364.8 M390.0,364.6L494.8,325.1L582.8,357.6 M390.0,357.3L494.8,317.8L582.8,350.3 M390.0,350.0L494.8,310.5L582.8,343.0 M390.0,342.7L494.8,303.2L582.8,335.7 M390.0,335.4L494.8,295.9L582.8,328.4 M390.0,328.1L494.8,288.6L582.8,321.1 M390.0,320.8L494.8,281.3L582.8,313.8 M390.0,313.5L494.8,274.0L582.8,306.5 M390.0,306.2L494.8,266.7L582.8,299.2 M390.0,298.9L494.8,259.4L582.8,291.9 M390.0,291.7L494.8,252.2L582.8,284.7 M390.0,284.4L494.8,244.9L582.8,277.4 M390.0,277.1L494.8,237.6L582.8,270.1 M390.0,269.8L494.8,230.3L582.8,262.8 M478.0,433.5L390.0,401.0 M483.5,432.0L395.5,398.9 M489.0,430.5L401.0,396.8 M494.5,428.9L406.5,394.8 M500.1,427.2L412.1,392.7 M505.6,425.4L417.6,390.6 M511.1,423.6L423.1,388.5 M516.6,421.7L428.6,386.4 M522.1,419.8L434.1,384.4 M527.6,417.8L439.6,382.3 M533.2,415.7L445.2,380.2 M538.7,413.6L450.7,378.1 M544.2,411.3L456.2,376.1 M549.7,409.1L461.7,374.0 M555.2,406.7L467.2,371.9 M560.7,404.3L472.7,369.8 M566.3,401.8L478.3,367.7 M571.8,399.3L483.8,365.7 M577.3,396.7L489.3,363.6 M582.8,394.0L494.8,361.5 M478.0,433.5L478.0,433.5L582.8,394.0 M472.5,431.5L472.5,431.5L577.3,392.0 M467.0,429.4L467.0,429.4L571.8,389.9 M461.5,427.4L461.5,427.4L566.3,387.9 M456.0,425.4L456.0,425.4L560.8,385.9 M450.5,423.3L450.5,423.3L555.3,383.8 M445.0,421.3L445.0,421.3L549.8,381.8 M439.5,419.3L439.5,419.3L544.3,379.8 M434.0,417.2L434.0,417.2L538.8,377.8 M428.5,415.2L428.5,415.2L533.3,375.7 M423.0,413.2L423.0,413.2L527.8,373.7 M417.5,411.2L417.5,411.2L522.3,371.7 M412.0,409.1L412.0,409.1L516.8,369.6 M406.5,407.1L406.5,407.1L511.3,367.6 M401.0,405.1L401.0,405.1L505.8,365.6 M395.5,403.0L395.5,403.0L500.3,363.5 M390.0,401.0L390.0,401.0L494.8,361.5" stroke="#f2f6fe" stroke-width="0.6" fill="none"/>
<polygon points="494.8,232.1 489.3,230.1 494.8,228.5 500.3,230.6" fill="#ff0000" stroke="#1a2a10" stroke-opacity="0.75" stroke-width="0.5" stroke-linejoin="round"/>
<polygon points="489.3,233.7 483.8,231.6 489.3,230.1 494.8,232.1" fill="#ff0000" stroke="#1a2a10" stroke-opacity="0.75" stroke-width="0.5" stroke-linejoin="round"/>
<polygon points="500.3,234.2 494.8,232.1 500.3,230.6 505.8,232.6" fill="#ff0000" stroke="#1a2a10" stroke-opacity="0.75" stroke-width="0.5" stroke-linejoin="round"/>
<polygon points="483.8,235.3 478.3,233.2 483.8,231.6 489.3,233.7" fill="#ff0000" stroke="#1a2a10" stroke-opacity="0.75" stroke-width="0.5" stroke-linejoin="round"/>
<polygon points="494.8,235.8 489.3,233.7 494.8,232.1 500.3,234.2" fill="#ff0000" stroke="#1a2a10" stroke-opacity="0.75" stroke-width="0.5" stroke-linejoin="round"/>
<polygon points="505.8,236.3 500.3,234.2 505.8,232.6 511.3,234.6" fill="#ff0000" stroke="#1a2a10" stroke-opacity="0.75" stroke-width="0.5" stroke-linejoin="round"/>
<polygon points="478.2,239.7 472.7,234.8 478.3,233.2 483.8,235.3" fill="#ff0000" stroke="#1a2a10" stroke-opacity="0.75" stroke-width="0.5" stroke-linejoin="round"/>
<polygon points="489.3,241.1 483.8,235.3 489.3,233.7 494.8,235.8" fill="#ff0000" stroke="#1a2a10" stroke-opacity="0.75" stroke-width="0.5" stroke-linejoin="round"/>
<polygon points="500.3,241.2 494.8,235.8 500.3,234.2 505.8,236.3" fill="#ff0000" stroke="#1a2a10" stroke-opacity="0.75" stroke-width="0.5" stroke-linejoin="round"/>
<polygon points="511.3,239.6 505.8,236.3 511.3,234.6 516.8,236.7" fill="#ff0000" stroke="#1a2a10" stroke-opacity="0.75" stroke-width="0.5" stroke-linejoin="round"/>
<polygon points="472.7,246.1 467.2,236.4 472.7,234.8 478.2,239.7" fill="#ff0000" stroke="#1a2a10" stroke-opacity="0.75" stroke-width="0.5" stroke-linejoin="round"/>
<polygon points="483.7,247.7 478.2,239.7 483.8,235.3 489.3,241.1" fill="#ff0000" stroke="#1a2a10" stroke-opacity="0.75" stroke-width="0.5" stroke-linejoin="round"/>
<polygon points="494.8,248.0 489.3,241.1 494.8,235.8 500.3,241.2" fill="#ff0000" stroke="#1a2a10" stroke-opacity="0.75" stroke-width="0.5" stroke-linejoin="round"/>
<polygon points="505.8,246.8 500.3,241.2 505.8,236.3 511.3,239.6" fill="#ff0000" stroke="#1a2a10" stroke-opacity="0.75" stroke-width="0.5" stroke-linejoin="round"/>
<polygon points="516.8,254.1 511.3,239.6 516.8,236.7 522.3,248.4" fill="#ff1e00" stroke="#1a2a10" stroke-opacity="0.75" stroke-width="0.5" stroke-linejoin="round"/>
<polygon points="467.2,253.5 461.7,238.1 467.2,236.4 472.7,246.1" fill="#ff0c00" stroke="#1a2a10" stroke-opacity="0.75" stroke-width="0.5" stroke-linejoin="round"/>
<polygon points="478.2,255.8 472.7,246.1 478.2,239.7 483.7,247.7" fill="#ff1a00" stroke="#1a2a10" stroke-opacity="0.75" stroke-width="0.5" stroke-linejoin="round"/>
<polygon points="489.2,255.6 483.7,247.7 489.3,241.1 494.8,248.0" fill="#ff1800" stroke="#1a2a10" stroke-opacity="0.75" stroke-width="0.5" stroke-linejoin="round"/>
<polygon points="500.3,254.9 494.8,248.0 500.3,241.2 505.8,246.8" fill="#ff1400" stroke="#1a2a10" stroke-opacity="0.75" stroke-width="0.5" stroke-linejoin="round"/>
<polygon points="511.3,261.2 505.8,246.8 511.3,239.6 516.8,254.1" fill="#ff3c00" stroke="#1a2a10" stroke-opacity="0.75" stroke-width="0.5" stroke-linejoin="round"/>
<polygon points="522.3,268.6 516.8,254.1 522.3,248.4 527.8,262.9" fill="#ff6a00" stroke="#1a2a10" stroke-opacity="0.75" stroke-width="0.5" stroke-linejoin="round"/>
<polygon points="461.7,261.3 456.2,239.8 461.7,238.1 467.2,253.5" fill="#ff2f00" stroke="#1a2a10" stroke-opacity="0.75" stroke-width="0.5" stroke-linejoin="round"/>
<polygon points="472.7,264.9 467.2,253.5 472.7,246.1 478.2,255.8" fill="#ff4400" stroke="#1a2a10" stroke-opacity="0.75" stroke-width="0.5" stroke-linejoin="round"/>
<polygon points="483.7,264.4 478.2,255.8 483.7,247.7 489.2,255.6" fill="#ff4100" stroke="#1a2a10" stroke-opacity="0.75" stroke-width="0.5" stroke-linejoin="round"/>
<polygon points="494.7,263.4 489.2,255.6 494.8,248.0 500.3,254.9" fill="#ff3b00" stroke="#1a2a10" stroke-opacity="0.75" stroke-width="0.5" stroke-linejoin="round"/>
<polygon points="505.8,269.2 500.3,254.9 505.8,246.8 511.3,261.2" fill="#ff5f00" stroke="#1a2a10" stroke-opacity="0.75" stroke-width="0.5" stroke-linejoin="round"/>
<polygon points="516.8,275.7 511.3,261.2 516.8,254.1 522.3,268.6" fill="#ff8800" stroke="#1a2a10" stroke-opacity="0.75" stroke-width="0.5" stroke-linejoin="round"/>
<polygon points="527.8,283.0 522.3,268.6 527.8,262.9 533.3,277.4" fill="#ffb600" stroke="#1a2a10" stroke-opacity="0.75" stroke-width="0.5" stroke-linejoin="round"/>
<polygon points="456.2,269.0 450.7,241.5 456.2,239.8 461.7,261.3" fill="#ff5200" stroke="#1a2a10" stroke-opacity="0.75" stroke-width="0.5" stroke-linejoin="round"/>
<polygon points="467.2,274.0 461.7,261.3 467.2,253.5 472.7,264.9" fill="#ff7000" stroke="#1a2a10" stroke-opacity="0.75" stroke-width="0.5" stroke-linejoin="round"/>
<polygon points="478.2,274.2 472.7,264.9 478.2,255.8 483.7,264.4" fill="#ff7000" stroke="#1a2a10" stroke-opacity="0.75" stroke-width="0.5" stroke-linejoin="round"/>
<polygon points="489.2,273.1 483.7,264.4 489.2,255.6 494.7,263.4" fill="#ff6900" stroke="#1a2a10" stroke-opacity="0.75" stroke-width="0.5" stroke-linejoin="round"/>
<polygon points="500.2,277.2 494.7,263.4 500.3,254.9 505.8,269.2" fill="#ff8200" stroke="#1a2a10" stroke-opacity="0.75" stroke-width="0.5" stroke-linejoin="round"/>
<polygon points="511.3,283.4 505.8,269.2 511.3,261.2 516.8,275.7" fill="#ffa900" stroke="#1a2a10" stroke-opacity="0.75" stroke-width="0.5" stroke-linejoin="round"/>
<polygon points="522.3,290.1 516.8,275.7 522.3,268.6 527.8,283.0" fill="#ffd300" stroke="#1a2a10" stroke-opacity="0.75" stroke-width="0.5" stroke-linejoin="round"/>
<polygon points="533.3,297.5 527.8,283.0 533.3,277.4 538.8,291.9" fill="#fbff00" stroke="#1a2a10" stroke-opacity="0.75" stroke-width="0.5" stroke-linejoin="round"/>
<polygon points="450.7,276.9 445.2,243.2 450.7,241.5 456.2,269.0" fill="#ff7600" stroke="#1a2a10" stroke-opacity="0.75" stroke-width="0.5" stroke-linejoin="round"/>
<polygon points="461.7,282.5 456.2,269.0 461.7,261.3 467.2,274.0" fill="#ff9700" stroke="#1a2a10" stroke-opacity="0.75" stroke-width="0.5" stroke-linejoin="round"/>
<polygon points="472.7,283.8 467.2,274.0 472.7,264.9 478.2,274.2" fill="#ff9e00" stroke="#1a2a10" stroke-opacity="0.75" stroke-width="0.5" stroke-linejoin="round"/>
<polygon points="483.7,283.5 478.2,274.2 483.7,264.4 489.2,273.1" fill="#ff9c00" stroke="#1a2a10" stroke-opacity="0.75" stroke-width="0.5" stroke-linejoin="round"/>
<polygon points="494.7,285.9 489.2,273.1 494.7,263.4 500.2,277.2" fill="#ffaa00" stroke="#1a2a10" stroke-opacity="0.75" stroke-width="0.5" stroke-linejoin="round"/>
<polygon points="505.7,291.0 500.2,277.2 505.8,269.2 511.3,283.4" fill="#ffca00" stroke="#1a2a10" stroke-opacity="0.75" stroke-width="0.5" stroke-linejoin="round"/>
<polygon points="516.8,297.6 511.3,283.4 516.8,275.7 522.3,290.1" fill="#fff300" stroke="#1a2a10" stroke-opacity="0.75" stroke-width="0.5" stroke-linejoin="round"/>
<polygon points="527.8,304.5 522.3,290.1 527.8,283.0 533.3,297.5" fill="#d0ff00" stroke="#1a2a10" stroke-opacity="0.75" stroke-width="0.5" stroke-linejoin="round"/>
<polygon points="538.8,309.0 533.3,297.5 538.8,291.9 544.3,303.7" fill="#a4ff00" stroke="#1a2a10" stroke-opacity="0.75" stroke-width="0.5" stroke-linejoin="round"/>
<polygon points="445.1,285.0 439.6,245.0 445.2,243.2 450.7,276.9" fill="#ff9a00" stroke="#1a2a10" stroke-opacity="0.75" stroke-width="0.5" stroke-linejoin="round"/>
<polygon points="456.2,290.6 450.7,276.9 456.2,269.0 461.7,282.5" fill="#ffbc00" stroke="#1a2a10" stroke-opacity="0.75" stroke-width="0.5" stroke-linejoin="round"/>
<polygon points="467.2,292.3 461.7,282.5 467.2,274.0 472.7,283.8" fill="#ffc600" stroke="#1a2a10" stroke-opacity="0.75" stroke-width="0.5" stroke-linejoin="round"/>
<polygon points="478.2,293.5 472.7,283.8 478.2,274.2 483.7,283.5" fill="#ffcc00" stroke="#1a2a10" stroke-opacity="0.75" stroke-width="0.5" stroke-linejoin="round"/>
<polygon points="489.2,295.0 483.7,283.5 489.2,273.1 494.7,285.9" fill="#ffd500" stroke="#1a2a10" stroke-opacity="0.75" stroke-width="0.5" stroke-linejoin="round"/>
<polygon points="500.2,298.6 494.7,285.9 500.2,277.2 505.7,291.0" fill="#ffeb00" stroke="#1a2a10" stroke-opacity="0.75" stroke-width="0.5" stroke-linejoin="round"/>
<polygon points="511.2,304.8 505.7,291.0 511.3,283.4 516.8,297.6" fill="#e3ff00" stroke="#1a2a10" stroke-opacity="0.75" stroke-width="0.5" stroke-linejoin="round"/>
<polygon points="522.3,311.8 516.8,297.6 522.3,290.1 527.8,304.5" fill="#a2ff00" stroke="#1a2a10" stroke-opacity="0.75" stroke-width="0.5" stroke-linejoin="round"/>
<polygon points="533.3,315.6 527.8,304.5 533.3,297.5 538.8,309.0" fill="#7dff00" stroke="#1a2a10" stroke-opacity="0.75" stroke-width="0.5" stroke-linejoin="round"/>
<polygon points="544.3,320.6 538.8,309.0 544.3,303.7 549.8,315.5" fill="#4cff00" stroke="#1a2a10" stroke-opacity="0.75" stroke-width="0.5" stroke-linejoin="round"/>
<polygon points="439.6,292.9 434.1,246.9 439.6,245.0 445.1,285.0" fill="#ffbe00" stroke="#1a2a10" stroke-opacity="0.75" stroke-width="0.5" stroke-linejoin="round"/>
<polygon points="450.6,298.5 445.1,285.0 450.7,276.9 456.2,290.6" fill="#ffdf00" stroke="#1a2a10" stroke-opacity="0.75" stroke-width="0.5" stroke-linejoin="round"/>
<polygon points="461.7,299.9 456.2,290.6 461.7,282.5 467.2,292.3" fill="#ffe700" stroke="#1a2a10" stroke-opacity="0.75" stroke-width="0.5" stroke-linejoin="round"/>
<polygon points="472.7,302.1 467.2,292.3 472.7,283.8 478.2,293.5" fill="#fff400" stroke="#1a2a10" stroke-opacity="0.75" stroke-width="0.5" stroke-linejoin="round"/>
<polygon points="483.7,303.8 478.2,293.5 483.7,283.5 489.2,295.0" fill="#fffe00" stroke="#1a2a10" stroke-opacity="0.75" stroke-width="0.5" stroke-linejoin="round"/>
<polygon points="494.7,306.4 489.2,295.0 494.7,285.9 500.2,298.6" fill="#e9ff00" stroke="#1a2a10" stroke-opacity="0.75" stroke-width="0.5" stroke-linejoin="round"/>
<polygon points="505.7,311.8 500.2,298.6 505.7,291.0 511.2,304.8" fill="#b8ff00" stroke="#1a2a10" stroke-opacity="0.75" stroke-width="0.5" stroke-linejoin="round"/>
<polygon points="516.7,318.6 511.2,304.8 516.8,297.6 522.3,311.8" fill="#78ff00" stroke="#1a2a10" stroke-opacity="0.75" stroke-width="0.5" stroke-linejoin="round"/>
<polygon points="527.8,322.6 522.3,311.8 527.8,304.5 533.3,315.6" fill="#52ff00" stroke="#1a2a10" stroke-opacity="0.75" stroke-width="0.5" stroke-linejoin="round"/>
<polygon points="538.8,326.8 533.3,315.6 538.8,309.0 544.3,320.6" fill="#29ff00" stroke="#1a2a10" stroke-opacity="0.75" stroke-width="0.5" stroke-linejoin="round"/>
<polygon points="549.8,335.2 544.3,320.6 549.8,315.5 555.3,330.7" fill="#00ff00" stroke="#1a2a10" stroke-opacity="0.75" stroke-width="0.5" stroke-linejoin="round"/>
<polygon points="434.1,300.5 428.6,248.7 434.1,246.9 439.6,292.9" fill="#ffe000" stroke="#1a2a10" stroke-opacity="0.75" stroke-width="0.5" stroke-linejoin="round"/>
<polygon points="445.1,306.2 439.6,292.9 445.1,285.0 450.6,298.5" fill="#faff00" stroke="#1a2a10" stroke-opacity="0.75" stroke-width="0.5" stroke-linejoin="round"/>
<polygon points="456.1,307.1 450.6,298.5 456.2,290.6 461.7,299.9" fill="#f3ff00" stroke="#1a2a10" stroke-opacity="0.75" stroke-width="0.5" stroke-linejoin="round"/>
<polygon points="467.2,309.3 461.7,299.9 467.2,292.3 472.7,302.1" fill="#e1ff00" stroke="#1a2a10" stroke-opacity="0.75" stroke-width="0.5" stroke-linejoin="round"/>
<polygon points="478.2,311.8 472.7,302.1 478.2,293.5 483.7,303.8" fill="#cbff00" stroke="#1a2a10" stroke-opacity="0.75" stroke-width="0.5" stroke-linejoin="round"/>
<polygon points="489.2,314.1 483.7,303.8 489.2,295.0 494.7,306.4" fill="#b6ff00" stroke="#1a2a10" stroke-opacity="0.75" stroke-width="0.5" stroke-linejoin="round"/>
<polygon points="500.2,318.7 494.7,306.4 500.2,298.6 505.7,311.8" fill="#8cff00" stroke="#1a2a10" stroke-opacity="0.75" stroke-width="0.5" stroke-linejoin="round"/>
<polygon points="511.2,324.9 505.7,311.8 511.2,304.8 516.7,318.6" fill="#53ff00" stroke="#1a2a10" stroke-opacity="0.75" stroke-width="0.5" stroke-linejoin="round"/>
<polygon points="522.2,329.0 516.7,318.6 522.3,311.8 527.8,322.6" fill="#2cff00" stroke="#1a2a10" stroke-opacity="0.75" stroke-width="0.5" stroke-linejoin="round"/>
<polygon points="533.3,333.4 527.8,322.6 533.3,315.6 538.8,326.8" fill="#03ff00" stroke="#1a2a10" stroke-opacity="0.75" stroke-width="0.5" stroke-linejoin="round"/>
<polygon points="544.3,340.6 538.8,326.8 544.3,320.6 549.8,335.2" fill="#00ff00" stroke="#1a2a10" stroke-opacity="0.75" stroke-width="0.5" stroke-linejoin="round"/>
<polygon points="555.3,349.8 549.8,335.2 555.3,330.7 560.8,345.8" fill="#00d12e" stroke="#1a2a10" stroke-opacity="0.75" stroke-width="0.5" stroke-linejoin="round"/>
<polygon points="428.6,308.0 423.1,250.6 428.6,248.7 434.1,300.5" fill="#fcff00" stroke="#1a2a10" stroke-opacity="0.75" stroke-width="0.5" stroke-linejoin="round"/>
<polygon points="439.6,314.0 434.1,300.5 439.6,292.9 445.1,306.2" fill="#c6ff00" stroke="#1a2a10" stroke-opacity="0.75" stroke-width="0.5" stroke-linejoin="round"/>
<polygon points="450.6,314.2 445.1,306.2 450.6,298.5 456.1,307.1" fill="#c5ff00" stroke="#1a2a10" stroke-opacity="0.75" stroke-width="0.5" stroke-linejoin="round"/>
<polygon points="461.6,315.8 456.1,307.1 461.7,299.9 467.2,309.3" fill="#b8ff00" stroke="#1a2a10" stroke-opacity="0.75" stroke-width="0.5" stroke-linejoin="round"/>
<polygon points="472.7,318.9 467.2,309.3 472.7,302.1 478.2,311.8" fill="#9dff00" stroke="#1a2a10" stroke-opacity="0.75" stroke-width="0.5" stroke-linejoin="round"/>
<polygon points="483.7,321.4 478.2,311.8 483.7,303.8 489.2,314.1" fill="#86ff00" stroke="#1a2a10" stroke-opacity="0.75" stroke-width="0.5" stroke-linejoin="round"/>
<polygon points="494.7,325.7 489.2,314.1 494.7,306.4 500.2,318.7" fill="#60ff00" stroke="#1a2a10" stroke-opacity="0.75" stroke-width="0.5" stroke-linejoin="round"/>
<polygon points="505.7,331.1 500.2,318.7 505.7,311.8 511.2,324.9" fill="#2fff00" stroke="#1a2a10" stroke-opacity="0.75" stroke-width="0.5" stroke-linejoin="round"/>
<polygon points="516.7,335.0 511.2,324.9 516.7,318.6 522.2,329.0" fill="#0aff00" stroke="#1a2a10" stroke-opacity="0.75" stroke-width="0.5" stroke-linejoin="round"/>
<polygon points="527.7,339.4 522.2,329.0 527.8,322.6 533.3,333.4" fill="#00ff00" stroke="#1a2a10" stroke-opacity="0.75" stroke-width="0.5" stroke-linejoin="round"/>
<polygon points="538.8,346.2 533.3,333.4 538.8,326.8 544.3,340.6" fill="#00f30c" stroke="#1a2a10" stroke-opacity="0.75" stroke-width="0.5" stroke-linejoin="round"/>
<polygon points="549.8,354.4 544.3,340.6 549.8,335.2 555.3,349.8" fill="#00c639" stroke="#1a2a10" stroke-opacity="0.75" stroke-width="0.5" stroke-linejoin="round"/>
<polygon points="560.8,361.7 555.3,349.8 560.8,345.8 566.3,358.0" fill="#009c63" stroke="#1a2a10" stroke-opacity="0.75" stroke-width="0.5" stroke-linejoin="round"/>
<polygon points="423.1,315.1 417.6,252.5 423.1,250.6 428.6,308.0" fill="#cdff00" stroke="#1a2a10" stroke-opacity="0.75" stroke-width="0.5" stroke-linejoin="round"/>
<polygon points="434.1,321.9 428.6,308.0 434.1,300.5 439.6,314.0" fill="#90ff00" stroke="#1a2a10" stroke-opacity="0.75" stroke-width="0.5" stroke-linejoin="round"/>
<polygon points="445.1,321.4 439.6,314.0 445.1,306.2 450.6,314.2" fill="#95ff00" stroke="#1a2a10" stroke-opacity="0.75" stroke-width="0.5" stroke-linejoin="round"/>
<polygon points="456.1,322.1 450.6,314.2 456.1,307.1 461.6,315.8" fill="#90ff00" stroke="#1a2a10" stroke-opacity="0.75" stroke-width="0.5" stroke-linejoin="round"/>
<polygon points="467.1,325.5 461.6,315.8 467.2,309.3 472.7,318.9" fill="#73ff00" stroke="#1a2a10" stroke-opacity="0.75" stroke-width="0.5" stroke-linejoin="round"/>
<polygon points="478.2,328.5 472.7,318.9 478.2,311.8 483.7,321.4" fill="#59ff00" stroke="#1a2a10" stroke-opacity="0.75" stroke-width="0.5" stroke-linejoin="round"/>
<polygon points="489.2,332.5 483.7,321.4 489.2,314.1 494.7,325.7" fill="#35ff00" stroke="#1a2a10" stroke-opacity="0.75" stroke-width="0.5" stroke-linejoin="round"/>
<polygon points="500.2,337.2 494.7,325.7 500.2,318.7 505.7,331.1" fill="#0aff00" stroke="#1a2a10" stroke-opacity="0.75" stroke-width="0.5" stroke-linejoin="round"/>
<polygon points="511.2,340.8 505.7,331.1 511.2,324.9 516.7,335.0" fill="#00ff00" stroke="#1a2a10" stroke-opacity="0.75" stroke-width="0.5" stroke-linejoin="round"/>
<polygon points="522.2,345.1 516.7,335.0 522.2,329.0 527.7,339.4" fill="#00ff00" stroke="#1a2a10" stroke-opacity="0.75" stroke-width="0.5" stroke-linejoin="round"/>
<polygon points="533.2,351.5 527.7,339.4 533.3,333.4 538.8,346.2" fill="#00e41b" stroke="#1a2a10" stroke-opacity="0.75" stroke-width="0.5" stroke-linejoin="round"/>
<polygon points="544.3,359.1 538.8,346.2 544.3,340.6 549.8,354.4" fill="#00b946" stroke="#1a2a10" stroke-opacity="0.75" stroke-width="0.5" stroke-linejoin="round"/>
<polygon points="555.3,365.8 549.8,354.4 555.3,349.8 560.8,361.7" fill="#00936c" stroke="#1a2a10" stroke-opacity="0.75" stroke-width="0.5" stroke-linejoin="round"/>
<polygon points="566.3,373.5 560.8,361.7 566.3,358.0 571.8,370.1" fill="#006798" stroke="#1a2a10" stroke-opacity="0.75" stroke-width="0.5" stroke-linejoin="round"/>
<polygon points="417.6,321.9 412.1,254.4 417.6,252.5 423.1,315.1" fill="#a1ff00" stroke="#1a2a10" stroke-opacity="0.75" stroke-width="0.5" stroke-linejoin="round"/>
<polygon points="428.6,329.5 423.1,315.1 428.6,308.0 434.1,321.9" fill="#5dff00" stroke="#1a2a10" stroke-opacity="0.75" stroke-width="0.5" stroke-linejoin="round"/>
<polygon points="439.6,328.8 434.1,321.9 439.6,314.0 445.1,321.4" fill="#64ff00" stroke="#1a2a10" stroke-opacity="0.75" stroke-width="0.5" stroke-linejoin="round"/>
<polygon points="450.6,328.9 445.1,321.4 450.6,314.2 456.1,322.1" fill="#65ff00" stroke="#1a2a10" stroke-opacity="0.75" stroke-width="0.5" stroke-linejoin="round"/>
<polygon points="461.6,332.0 456.1,322.1 461.6,315.8 467.1,325.5" fill="#4aff00" stroke="#1a2a10" stroke-opacity="0.75" stroke-width="0.5" stroke-linejoin="round"/>
<polygon points="472.6,335.3 467.1,325.5 472.7,318.9 478.2,328.5" fill="#2dff00" stroke="#1a2a10" stroke-opacity="0.75" stroke-width="0.5" stroke-linejoin="round"/>
<polygon points="483.7,339.3 478.2,328.5 483.7,321.4 489.2,332.5" fill="#0aff00" stroke="#1a2a10" stroke-opacity="0.75" stroke-width="0.5" stroke-linejoin="round"/>
<polygon points="494.7,343.5 489.2,332.5 494.7,325.7 500.2,337.2" fill="#00ff00" stroke="#1a2a10" stroke-opacity="0.75" stroke-width="0.5" stroke-linejoin="round"/>
<polygon points="505.7,346.6 500.2,337.2 505.7,331.1 511.2,340.8" fill="#00ff00" stroke="#1a2a10" stroke-opacity="0.75" stroke-width="0.5" stroke-linejoin="round"/>
<polygon points="516.7,350.6 511.2,340.8 516.7,335.0 522.2,345.1" fill="#00f609" stroke="#1a2a10" stroke-opacity="0.75" stroke-width="0.5" stroke-linejoin="round"/>
<polygon points="527.7,356.4 522.2,345.1 527.7,339.4 533.2,351.5" fill="#00d629" stroke="#1a2a10" stroke-opacity="0.75" stroke-width="0.5" stroke-linejoin="round"/>
<polygon points="538.7,363.5 533.2,351.5 538.8,346.2 544.3,359.1" fill="#00ae51" stroke="#1a2a10" stroke-opacity="0.75" stroke-width="0.5" stroke-linejoin="round"/>
<polygon points="549.8,369.9 544.3,359.1 549.8,354.4 555.3,365.8" fill="#008a75" stroke="#1a2a10" stroke-opacity="0.75" stroke-width="0.5" stroke-linejoin="round"/>
<polygon points="560.8,377.1 555.3,365.8 560.8,361.7 566.3,373.5" fill="#00619e" stroke="#1a2a10" stroke-opacity="0.75" stroke-width="0.5" stroke-linejoin="round"/>
<polygon points="571.8,385.1 566.3,373.5 571.8,370.1 577.3,382.1" fill="#0034cb" stroke="#1a2a10" stroke-opacity="0.75" stroke-width="0.5" stroke-linejoin="round"/>
<polygon points="412.0,328.4 406.5,256.4 412.1,254.4 417.6,321.9" fill="#79ff00" stroke="#1a2a10" stroke-opacity="0.75" stroke-width="0.5" stroke-linejoin="round"/>
<polygon points="423.1,336.5 417.6,321.9 423.1,315.1 428.6,329.5" fill="#2eff00" stroke="#1a2a10" stroke-opacity="0.75" stroke-width="0.5" stroke-linejoin="round"/>
<polygon points="434.1,336.0 428.6,329.5 434.1,321.9 439.6,328.8" fill="#34ff00" stroke="#1a2a10" stroke-opacity="0.75" stroke-width="0.5" stroke-linejoin="round"/>
<polygon points="445.1,335.8 439.6,328.8 445.1,321.4 450.6,328.9" fill="#38ff00" stroke="#1a2a10" stroke-opacity="0.75" stroke-width="0.5" stroke-linejoin="round"/>
<polygon points="456.1,338.6 450.6,328.9 456.1,322.1 461.6,332.0" fill="#20ff00" stroke="#1a2a10" stroke-opacity="0.75" stroke-width="0.5" stroke-linejoin="round"/>
<polygon points="467.1,341.9 461.6,332.0 467.1,325.5 472.6,335.3" fill="#03ff00" stroke="#1a2a10" stroke-opacity="0.75" stroke-width="0.5" stroke-linejoin="round"/>
<polygon points="478.1,346.0 472.6,335.3 478.2,328.5 483.7,339.3" fill="#00ff00" stroke="#1a2a10" stroke-opacity="0.75" stroke-width="0.5" stroke-linejoin="round"/>
<polygon points="489.2,350.1 483.7,339.3 489.2,332.5 494.7,343.5" fill="#00ff00" stroke="#1a2a10" stroke-opacity="0.75" stroke-width="0.5" stroke-linejoin="round"/>
<polygon points="500.2,352.5 494.7,343.5 500.2,337.2 505.7,346.6" fill="#00f708" stroke="#1a2a10" stroke-opacity="0.75" stroke-width="0.5" stroke-linejoin="round"/>
<polygon points="511.2,356.0 505.7,346.6 511.2,340.8 516.7,350.6" fill="#00e41b" stroke="#1a2a10" stroke-opacity="0.75" stroke-width="0.5" stroke-linejoin="round"/>
<polygon points="522.2,361.1 516.7,350.6 522.2,345.1 527.7,356.4" fill="#00c837" stroke="#1a2a10" stroke-opacity="0.75" stroke-width="0.5" stroke-linejoin="round"/>
<polygon points="533.2,367.7 527.7,356.4 533.2,351.5 538.7,363.5" fill="#00a45b" stroke="#1a2a10" stroke-opacity="0.75" stroke-width="0.5" stroke-linejoin="round"/>
<polygon points="544.2,373.9 538.7,363.5 544.3,359.1 549.8,369.9" fill="#00827d" stroke="#1a2a10" stroke-opacity="0.75" stroke-width="0.5" stroke-linejoin="round"/>
<polygon points="555.3,380.8 549.8,369.9 555.3,365.8 560.8,377.1" fill="#005ba4" stroke="#1a2a10" stroke-opacity="0.75" stroke-width="0.5" stroke-linejoin="round"/>
<polygon points="566.3,388.2 560.8,377.1 566.3,373.5 571.8,385.1" fill="#0031ce" stroke="#1a2a10" stroke-opacity="0.75" stroke-width="0.5" stroke-linejoin="round"/>
<polygon points="577.3,396.7 571.8,385.1 577.3,382.1 582.8,394.0" fill="#0000ff" stroke="#1a2a10" stroke-opacity="0.75" stroke-width="0.5" stroke-linejoin="round"/>
<polygon points="406.5,334.7 401.0,258.4 406.5,256.4 412.0,328.4" fill="#52ff00" stroke="#1a2a10" stroke-opacity="0.75" stroke-width="0.5" stroke-linejoin="round"/>
<polygon points="417.5,342.9 412.0,328.4 417.6,321.9 423.1,336.5" fill="#07ff00" stroke="#1a2a10" stroke-opacity="0.75" stroke-width="0.5" stroke-linejoin="round"/>
<polygon points="428.6,342.9 423.1,336.5 428.6,329.5 434.1,336.0" fill="#08ff00" stroke="#1a2a10" stroke-opacity="0.75" stroke-width="0.5" stroke-linejoin="round"/>
<polygon points="439.6,342.6 434.1,336.0 439.6,328.8 445.1,335.8" fill="#0cff00" stroke="#1a2a10" stroke-opacity="0.75" stroke-width="0.5" stroke-linejoin="round"/>
<polygon points="450.6,345.1 445.1,335.8 450.6,328.9 456.1,338.6" fill="#00ff00" stroke="#1a2a10" stroke-opacity="0.75" stroke-width="0.5" stroke-linejoin="round"/>
<polygon points="461.6,348.3 456.1,338.6 461.6,332.0 467.1,341.9" fill="#00ff00" stroke="#1a2a10" stroke-opacity="0.75" stroke-width="0.5" stroke-linejoin="round"/>
<polygon points="472.6,352.5 467.1,341.9 472.6,335.3 478.1,346.0" fill="#00ff00" stroke="#1a2a10" stroke-opacity="0.75" stroke-width="0.5" stroke-linejoin="round"/>
<polygon points="483.6,356.7 478.1,346.0 483.7,339.3 489.2,350.1" fill="#00eb14" stroke="#1a2a10" stroke-opacity="0.75" stroke-width="0.5" stroke-linejoin="round"/>
<polygon points="494.7,358.4 489.2,350.1 494.7,343.5 500.2,352.5" fill="#00e21d" stroke="#1a2a10" stroke-opacity="0.75" stroke-width="0.5" stroke-linejoin="round"/>
<polygon points="505.7,361.4 500.2,352.5 505.7,346.6 511.2,356.0" fill="#00d22d" stroke="#1a2a10" stroke-opacity="0.75" stroke-width="0.5" stroke-linejoin="round"/>
<polygon points="516.7,365.9 511.2,356.0 516.7,350.6 522.2,361.1" fill="#00ba45" stroke="#1a2a10" stroke-opacity="0.75" stroke-width="0.5" stroke-linejoin="round"/>
<polygon points="527.7,371.7 522.2,361.1 527.7,356.4 533.2,367.7" fill="#009b64" stroke="#1a2a10" stroke-opacity="0.75" stroke-width="0.5" stroke-linejoin="round"/>
<polygon points="538.7,377.6 533.2,367.7 538.7,363.5 544.2,373.9" fill="#007a85" stroke="#1a2a10" stroke-opacity="0.75" stroke-width="0.5" stroke-linejoin="round"/>
<polygon points="549.7,384.3 544.2,373.9 549.8,369.9 555.3,380.8" fill="#0055aa" stroke="#1a2a10" stroke-opacity="0.75" stroke-width="0.5" stroke-linejoin="round"/>
<polygon points="560.8,391.3 555.3,380.8 560.8,377.1 566.3,388.2" fill="#002dd2" stroke="#1a2a10" stroke-opacity="0.75" stroke-width="0.5" stroke-linejoin="round"/>
<polygon points="571.8,399.3 566.3,388.2 571.8,385.1 577.3,396.7" fill="#0000ff" stroke="#1a2a10" stroke-opacity="0.75" stroke-width="0.5" stroke-linejoin="round"/>
<polygon points="401.0,340.3 395.5,260.4 401.0,258.4 406.5,334.7" fill="#31ff00" stroke="#1a2a10" stroke-opacity="0.75" stroke-width="0.5" stroke-linejoin="round"/>
<polygon points="412.0,348.7 406.5,334.7 412.0,328.4 417.5,342.9" fill="#00ff00" stroke="#1a2a10" stroke-opacity="0.75" stroke-width="0.5" stroke-linejoin="round"/>
<polygon points="423.0,349.3 417.5,342.9 423.1,336.5 428.6,342.9" fill="#00ff00" stroke="#1a2a10" stroke-opacity="0.75" stroke-width="0.5" stroke-linejoin="round"/>
<polygon points="434.1,349.2 428.6,342.9 434.1,336.0 439.6,342.6" fill="#00ff00" stroke="#1a2a10" stroke-opacity="0.75" stroke-width="0.5" stroke-linejoin="round"/>
<polygon points="445.1,351.5 439.6,342.6 445.1,335.8 450.6,345.1" fill="#00ff00" stroke="#1a2a10" stroke-opacity="0.75" stroke-width="0.5" stroke-linejoin="round"/>
<polygon points="456.1,354.5 450.6,345.1 456.1,338.6 461.6,348.3" fill="#00ff00" stroke="#1a2a10" stroke-opacity="0.75" stroke-width="0.5" stroke-linejoin="round"/>
<polygon points="467.1,358.7 461.6,348.3 467.1,341.9 472.6,352.5" fill="#00ea15" stroke="#1a2a10" stroke-opacity="0.75" stroke-width="0.5" stroke-linejoin="round"/>
<polygon points="478.1,363.0 472.6,352.5 478.1,346.0 483.6,356.7" fill="#00d32c" stroke="#1a2a10" stroke-opacity="0.75" stroke-width="0.5" stroke-linejoin="round"/>
<polygon points="489.1,364.4 483.6,356.7 489.2,350.1 494.7,358.4" fill="#00cd32" stroke="#1a2a10" stroke-opacity="0.75" stroke-width="0.5" stroke-linejoin="round"/>
<polygon points="500.2,366.8 494.7,358.4 500.2,352.5 505.7,361.4" fill="#00c13e" stroke="#1a2a10" stroke-opacity="0.75" stroke-width="0.5" stroke-linejoin="round"/>
<polygon points="511.2,370.6 505.7,361.4 511.2,356.0 516.7,365.9" fill="#00ad52" stroke="#1a2a10" stroke-opacity="0.75" stroke-width="0.5" stroke-linejoin="round"/>
<polygon points="522.2,375.8 516.7,365.9 522.2,361.1 527.7,371.7" fill="#00916e" stroke="#1a2a10" stroke-opacity="0.75" stroke-width="0.5" stroke-linejoin="round"/>
<polygon points="533.2,381.3 527.7,371.7 533.2,367.7 538.7,377.6" fill="#00738c" stroke="#1a2a10" stroke-opacity="0.75" stroke-width="0.5" stroke-linejoin="round"/>
<polygon points="544.2,387.6 538.7,377.6 544.2,373.9 549.7,384.3" fill="#0050af" stroke="#1a2a10" stroke-opacity="0.75" stroke-width="0.5" stroke-linejoin="round"/>
<polygon points="555.2,394.3 549.7,384.3 555.3,380.8 560.8,391.3" fill="#002bd4" stroke="#1a2a10" stroke-opacity="0.75" stroke-width="0.5" stroke-linejoin="round"/>
<polygon points="566.3,401.8 560.8,391.3 566.3,388.2 571.8,399.3" fill="#0000ff" stroke="#1a2a10" stroke-opacity="0.75" stroke-width="0.5" stroke-linejoin="round"/>
<polygon points="395.5,344.9 390.0,262.5 395.5,260.4 401.0,340.3" fill="#19ff00" stroke="#1a2a10" stroke-opacity="0.75" stroke-width="0.5" stroke-linejoin="round"/>
<polygon points="406.5,353.8 401.0,340.3 406.5,334.7 412.0,348.7" fill="#00ff00" stroke="#1a2a10" stroke-opacity="0.75" stroke-width="0.5" stroke-linejoin="round"/>
<polygon points="417.5,355.5 412.0,348.7 417.5,342.9 423.0,349.3" fill="#00ff00" stroke="#1a2a10" stroke-opacity="0.75" stroke-width="0.5" stroke-linejoin="round"/>
<polygon points="428.5,355.7 423.0,349.3 428.6,342.9 434.1,349.2" fill="#00ff00" stroke="#1a2a10" stroke-opacity="0.75" stroke-width="0.5" stroke-linejoin="round"/>
<polygon points="439.6,357.7 434.1,349.2 439.6,342.6 445.1,351.5" fill="#00f807" stroke="#1a2a10" stroke-opacity="0.75" stroke-width="0.5" stroke-linejoin="round"/>
<polygon points="450.6,360.5 445.1,351.5 450.6,345.1 456.1,354.5" fill="#00ea15" stroke="#1a2a10" stroke-opacity="0.75" stroke-width="0.5" stroke-linejoin="round"/>
<polygon points="461.6,364.8 456.1,354.5 461.6,348.3 467.1,358.7" fill="#00d42b" stroke="#1a2a10" stroke-opacity="0.75" stroke-width="0.5" stroke-linejoin="round"/>
<polygon points="472.6,369.1 467.1,358.7 472.6,352.5 478.1,363.0" fill="#00bd42" stroke="#1a2a10" stroke-opacity="0.75" stroke-width="0.5" stroke-linejoin="round"/>
<polygon points="483.6,370.2 478.1,363.0 483.6,356.7 489.1,364.4" fill="#00b847" stroke="#1a2a10" stroke-opacity="0.75" stroke-width="0.5" stroke-linejoin="round"/>
<polygon points="494.6,372.1 489.1,364.4 494.7,358.4 500.2,366.8" fill="#00af50" stroke="#1a2a10" stroke-opacity="0.75" stroke-width="0.5" stroke-linejoin="round"/>
<polygon points="505.7,375.3 500.2,366.8 505.7,361.4 511.2,370.6" fill="#009f60" stroke="#1a2a10" stroke-opacity="0.75" stroke-width="0.5" stroke-linejoin="round"/>
<polygon points="516.7,379.8 511.2,370.6 516.7,365.9 522.2,375.8" fill="#008778" stroke="#1a2a10" stroke-opacity="0.75" stroke-width="0.5" stroke-linejoin="round"/>
<polygon points="527.7,384.9 522.2,375.8 527.7,371.7 533.2,381.3" fill="#006c93" stroke="#1a2a10" stroke-opacity="0.75" stroke-width="0.5" stroke-linejoin="round"/>
<polygon points="538.7,390.8 533.2,381.3 538.7,377.6 544.2,387.6" fill="#004bb4" stroke="#1a2a10" stroke-opacity="0.75" stroke-width="0.5" stroke-linejoin="round"/>
<polygon points="549.7,397.2 544.2,387.6 549.7,384.3 555.2,394.3" fill="#0028d7" stroke="#1a2a10" stroke-opacity="0.75" stroke-width="0.5" stroke-linejoin="round"/>
<polygon points="560.7,404.3 555.2,394.3 560.8,391.3 566.3,401.8" fill="#0000ff" stroke="#1a2a10" stroke-opacity="0.75" stroke-width="0.5" stroke-linejoin="round"/>
<polygon points="401.0,358.0 395.5,344.9 401.0,340.3 406.5,353.8" fill="#00ff00" stroke="#1a2a10" stroke-opacity="0.75" stroke-width="0.5" stroke-linejoin="round"/>
<polygon points="412.0,361.1 406.5,353.8 412.0,348.7 417.5,355.5" fill="#00ef10" stroke="#1a2a10" stroke-opacity="0.75" stroke-width="0.5" stroke-linejoin="round"/>
<polygon points="423.0,362.3 417.5,355.5 423.0,349.3 428.5,355.7" fill="#00e916" stroke="#1a2a10" stroke-opacity="0.75" stroke-width="0.5" stroke-linejoin="round"/>
<polygon points="434.0,363.6 428.5,355.7 434.1,349.2 439.6,357.7" fill="#00e21d" stroke="#1a2a10" stroke-opacity="0.75" stroke-width="0.5" stroke-linejoin="round"/>
<polygon points="445.1,366.1 439.6,357.7 445.1,351.5 450.6,360.5" fill="#00d629" stroke="#1a2a10" stroke-opacity="0.75" stroke-width="0.5" stroke-linejoin="round"/>
<polygon points="456.1,370.6 450.6,360.5 456.1,354.5 461.6,364.8" fill="#00bf40" stroke="#1a2a10" stroke-opacity="0.75" stroke-width="0.5" stroke-linejoin="round"/>
<polygon points="467.1,375.1 461.6,364.8 467.1,358.7 472.6,369.1" fill="#00a857" stroke="#1a2a10" stroke-opacity="0.75" stroke-width="0.5" stroke-linejoin="round"/>
<polygon points="478.1,376.1 472.6,369.1 478.1,363.0 483.6,370.2" fill="#00a45b" stroke="#1a2a10" stroke-opacity="0.75" stroke-width="0.5" stroke-linejoin="round"/>
<polygon points="489.1,377.4 483.6,370.2 489.1,364.4 494.6,372.1" fill="#009d62" stroke="#1a2a10" stroke-opacity="0.75" stroke-width="0.5" stroke-linejoin="round"/>
<polygon points="500.1,380.0 494.6,372.1 500.2,366.8 505.7,375.3" fill="#00916e" stroke="#1a2a10" stroke-opacity="0.75" stroke-width="0.5" stroke-linejoin="round"/>
<polygon points="511.2,383.9 505.7,375.3 511.2,370.6 516.7,379.8" fill="#007c83" stroke="#1a2a10" stroke-opacity="0.75" stroke-width="0.5" stroke-linejoin="round"/>
<polygon points="522.2,388.4 516.7,379.8 522.2,375.8 527.7,384.9" fill="#00649b" stroke="#1a2a10" stroke-opacity="0.75" stroke-width="0.5" stroke-linejoin="round"/>
<polygon points="533.2,394.0 527.7,384.9 533.2,381.3 538.7,390.8" fill="#0046b9" stroke="#1a2a10" stroke-opacity="0.75" stroke-width="0.5" stroke-linejoin="round"/>
<polygon points="544.2,399.9 538.7,390.8 544.2,387.6 549.7,397.2" fill="#0026d9" stroke="#1a2a10" stroke-opacity="0.75" stroke-width="0.5" stroke-linejoin="round"/>
<polygon points="555.2,406.7 549.7,397.2 555.2,394.3 560.7,404.3" fill="#0000ff" stroke="#1a2a10" stroke-opacity="0.75" stroke-width="0.5" stroke-linejoin="round"/>
<polygon points="406.5,365.5 401.0,358.0 406.5,353.8 412.0,361.1" fill="#00e11e" stroke="#1a2a10" stroke-opacity="0.75" stroke-width="0.5" stroke-linejoin="round"/>
<polygon points="417.5,368.3 412.0,361.1 417.5,355.5 423.0,362.3" fill="#00d22d" stroke="#1a2a10" stroke-opacity="0.75" stroke-width="0.5" stroke-linejoin="round"/>
<polygon points="428.5,369.6 423.0,362.3 428.5,355.7 434.0,363.6" fill="#00cd32" stroke="#1a2a10" stroke-opacity="0.75" stroke-width="0.5" stroke-linejoin="round"/>
<polygon points="439.5,371.6 434.0,363.6 439.6,357.7 445.1,366.1" fill="#00c33c" stroke="#1a2a10" stroke-opacity="0.75" stroke-width="0.5" stroke-linejoin="round"/>
<polygon points="450.6,376.0 445.1,366.1 450.6,360.5 456.1,370.6" fill="#00ac53" stroke="#1a2a10" stroke-opacity="0.75" stroke-width="0.5" stroke-linejoin="round"/>
<polygon points="461.6,380.7 456.1,370.6 461.6,364.8 467.1,375.1" fill="#00946b" stroke="#1a2a10" stroke-opacity="0.75" stroke-width="0.5" stroke-linejoin="round"/>
<polygon points="472.6,382.0 467.1,375.1 472.6,369.1 478.1,376.1" fill="#008e71" stroke="#1a2a10" stroke-opacity="0.75" stroke-width="0.5" stroke-linejoin="round"/>
<polygon points="483.6,383.0 478.1,376.1 483.6,370.2 489.1,377.4" fill="#008a75" stroke="#1a2a10" stroke-opacity="0.75" stroke-width="0.5" stroke-linejoin="round"/>
<polygon points="494.6,384.7 489.1,377.4 494.6,372.1 500.1,380.0" fill="#00827d" stroke="#1a2a10" stroke-opacity="0.75" stroke-width="0.5" stroke-linejoin="round"/>
<polygon points="505.6,387.9 500.1,380.0 505.7,375.3 511.2,383.9" fill="#00728d" stroke="#1a2a10" stroke-opacity="0.75" stroke-width="0.5" stroke-linejoin="round"/>
<polygon points="516.7,391.8 511.2,383.9 516.7,379.8 522.2,388.4" fill="#005da2" stroke="#1a2a10" stroke-opacity="0.75" stroke-width="0.5" stroke-linejoin="round"/>
<polygon points="527.7,397.0 522.2,388.4 527.7,384.9 533.2,394.0" fill="#0042bd" stroke="#1a2a10" stroke-opacity="0.75" stroke-width="0.5" stroke-linejoin="round"/>
<polygon points="538.7,402.7 533.2,394.0 538.7,390.8 544.2,399.9" fill="#0023dc" stroke="#1a2a10" stroke-opacity="0.75" stroke-width="0.5" stroke-linejoin="round"/>
<polygon points="549.7,409.1 544.2,399.9 549.7,397.2 555.2,406.7" fill="#0000ff" stroke="#1a2a10" stroke-opacity="0.75" stroke-width="0.5" stroke-linejoin="round"/>
<polygon points="412.0,373.1 406.5,365.5 412.0,361.1 417.5,368.3" fill="#00c33c" stroke="#1a2a10" stroke-opacity="0.75" stroke-width="0.5" stroke-linejoin="round"/>
<polygon points="423.0,375.0 417.5,368.3 423.0,362.3 428.5,369.6" fill="#00ba45" stroke="#1a2a10" stroke-opacity="0.75" stroke-width="0.5" stroke-linejoin="round"/>
<polygon points="434.0,376.8 428.5,369.6 434.0,363.6 439.5,371.6" fill="#00b14e" stroke="#1a2a10" stroke-opacity="0.75" stroke-width="0.5" stroke-linejoin="round"/>
<polygon points="445.0,380.9 439.5,371.6 445.1,366.1 450.6,376.0" fill="#009c63" stroke="#1a2a10" stroke-opacity="0.75" stroke-width="0.5" stroke-linejoin="round"/>
<polygon points="456.1,385.8 450.6,376.0 456.1,370.6 461.6,380.7" fill="#00837c" stroke="#1a2a10" stroke-opacity="0.75" stroke-width="0.5" stroke-linejoin="round"/>
<polygon points="467.1,387.7 461.6,380.7 467.1,375.1 472.6,382.0" fill="#007a85" stroke="#1a2a10" stroke-opacity="0.75" stroke-width="0.5" stroke-linejoin="round"/>
<polygon points="478.1,388.9 472.6,382.0 478.1,376.1 483.6,383.0" fill="#00758a" stroke="#1a2a10" stroke-opacity="0.75" stroke-width="0.5" stroke-linejoin="round"/>
<polygon points="489.1,389.7 483.6,383.0 489.1,377.4 494.6,384.7" fill="#00728d" stroke="#1a2a10" stroke-opacity="0.75" stroke-width="0.5" stroke-linejoin="round"/>
<polygon points="500.1,392.0 494.6,384.7 500.1,380.0 505.6,387.9" fill="#006699" stroke="#1a2a10" stroke-opacity="0.75" stroke-width="0.5" stroke-linejoin="round"/>
<polygon points="511.1,395.2 505.6,387.9 511.2,383.9 516.7,391.8" fill="#0056a9" stroke="#1a2a10" stroke-opacity="0.75" stroke-width="0.5" stroke-linejoin="round"/>
<polygon points="522.2,399.8 516.7,391.8 522.2,388.4 527.7,397.0" fill="#003ec1" stroke="#1a2a10" stroke-opacity="0.75" stroke-width="0.5" stroke-linejoin="round"/>
<polygon points="533.2,405.3 527.7,397.0 533.2,394.0 538.7,402.7" fill="#0021de" stroke="#1a2a10" stroke-opacity="0.75" stroke-width="0.5" stroke-linejoin="round"/>
<polygon points="544.2,411.3 538.7,402.7 544.2,399.9 549.7,409.1" fill="#0000ff" stroke="#1a2a10" stroke-opacity="0.75" stroke-width="0.5" stroke-linejoin="round"/>
<polygon points="417.5,379.3 412.0,373.1 417.5,368.3 423.0,375.0" fill="#00ac53" stroke="#1a2a10" stroke-opacity="0.75" stroke-width="0.5" stroke-linejoin="round"/>
<polygon points="428.5,381.6 423.0,375.0 428.5,369.6 434.0,376.8" fill="#00a15e" stroke="#1a2a10" stroke-opacity="0.75" stroke-width="0.5" stroke-linejoin="round"/>
<polygon points="439.5,385.6 434.0,376.8 439.5,371.6 445.0,380.9" fill="#008d72" stroke="#1a2a10" stroke-opacity="0.75" stroke-width="0.5" stroke-linejoin="round"/>
<polygon points="450.5,390.3 445.0,380.9 450.6,376.0 456.1,385.8" fill="#00748b" stroke="#1a2a10" stroke-opacity="0.75" stroke-width="0.5" stroke-linejoin="round"/>
<polygon points="461.6,392.8 456.1,385.8 461.6,380.7 467.1,387.7" fill="#006897" stroke="#1a2a10" stroke-opacity="0.75" stroke-width="0.5" stroke-linejoin="round"/>
<polygon points="472.6,394.7 467.1,387.7 472.6,382.0 478.1,388.9" fill="#00609f" stroke="#1a2a10" stroke-opacity="0.75" stroke-width="0.5" stroke-linejoin="round"/>
<polygon points="483.6,395.0 478.1,388.9 483.6,383.0 489.1,389.7" fill="#00609f" stroke="#1a2a10" stroke-opacity="0.75" stroke-width="0.5" stroke-linejoin="round"/>
<polygon points="494.6,396.4 489.1,389.7 494.6,384.7 500.1,392.0" fill="#0059a6" stroke="#1a2a10" stroke-opacity="0.75" stroke-width="0.5" stroke-linejoin="round"/>
<polygon points="505.6,398.7 500.1,392.0 505.6,387.9 511.1,395.2" fill="#004fb0" stroke="#1a2a10" stroke-opacity="0.75" stroke-width="0.5" stroke-linejoin="round"/>
<polygon points="516.6,402.5 511.1,395.2 516.7,391.8 522.2,399.8" fill="#003bc4" stroke="#1a2a10" stroke-opacity="0.75" stroke-width="0.5" stroke-linejoin="round"/>
<polygon points="527.7,407.7 522.2,399.8 527.7,397.0 533.2,405.3" fill="#001fe0" stroke="#1a2a10" stroke-opacity="0.75" stroke-width="0.5" stroke-linejoin="round"/>
<polygon points="538.7,413.6 533.2,405.3 538.7,402.7 544.2,411.3" fill="#0000ff" stroke="#1a2a10" stroke-opacity="0.75" stroke-width="0.5" stroke-linejoin="round"/>
<polygon points="423.0,385.5 417.5,379.3 423.0,375.0 428.5,381.6" fill="#009669" stroke="#1a2a10" stroke-opacity="0.75" stroke-width="0.5" stroke-linejoin="round"/>
<polygon points="434.0,389.7 428.5,381.6 434.0,376.8 439.5,385.6" fill="#00817e" stroke="#1a2a10" stroke-opacity="0.75" stroke-width="0.5" stroke-linejoin="round"/>
<polygon points="445.0,394.3 439.5,385.6 445.0,380.9 450.5,390.3" fill="#006996" stroke="#1a2a10" stroke-opacity="0.75" stroke-width="0.5" stroke-linejoin="round"/>
<polygon points="456.0,397.2 450.5,390.3 456.1,385.8 461.6,392.8" fill="#005ba4" stroke="#1a2a10" stroke-opacity="0.75" stroke-width="0.5" stroke-linejoin="round"/>
<polygon points="467.1,399.8 461.6,392.8 467.1,387.7 472.6,394.7" fill="#004eb1" stroke="#1a2a10" stroke-opacity="0.75" stroke-width="0.5" stroke-linejoin="round"/>
<polygon points="478.1,400.2 472.6,394.7 478.1,388.9 483.6,395.0" fill="#004eb1" stroke="#1a2a10" stroke-opacity="0.75" stroke-width="0.5" stroke-linejoin="round"/>
<polygon points="489.1,401.1 483.6,395.0 489.1,389.7 494.6,396.4" fill="#004ab5" stroke="#1a2a10" stroke-opacity="0.75" stroke-width="0.5" stroke-linejoin="round"/>
<polygon points="500.1,402.4 494.6,396.4 500.1,392.0 505.6,398.7" fill="#0045ba" stroke="#1a2a10" stroke-opacity="0.75" stroke-width="0.5" stroke-linejoin="round"/>
<polygon points="511.1,405.3 505.6,398.7 511.1,395.2 516.6,402.5" fill="#0037c8" stroke="#1a2a10" stroke-opacity="0.75" stroke-width="0.5" stroke-linejoin="round"/>
<polygon points="522.1,410.1 516.6,402.5 522.2,399.8 527.7,407.7" fill="#001de2" stroke="#1a2a10" stroke-opacity="0.75" stroke-width="0.5" stroke-linejoin="round"/>
<polygon points="533.2,415.7 527.7,407.7 533.2,405.3 538.7,413.6" fill="#0000ff" stroke="#1a2a10" stroke-opacity="0.75" stroke-width="0.5" stroke-linejoin="round"/>
<polygon points="428.5,393.1 423.0,385.5 428.5,381.6 434.0,389.7" fill="#007887" stroke="#1a2a10" stroke-opacity="0.75" stroke-width="0.5" stroke-linejoin="round"/>
<polygon points="439.5,397.7 434.0,389.7 439.5,385.6 445.0,394.3" fill="#00609f" stroke="#1a2a10" stroke-opacity="0.75" stroke-width="0.5" stroke-linejoin="round"/>
<polygon points="450.5,401.0 445.0,394.3 450.5,390.3 456.0,397.2" fill="#0050af" stroke="#1a2a10" stroke-opacity="0.75" stroke-width="0.5" stroke-linejoin="round"/>
<polygon points="461.5,404.1 456.0,397.2 461.6,392.8 467.1,399.8" fill="#0041be" stroke="#1a2a10" stroke-opacity="0.75" stroke-width="0.5" stroke-linejoin="round"/>
<polygon points="472.6,404.9 467.1,399.8 472.6,394.7 478.1,400.2" fill="#003ec1" stroke="#1a2a10" stroke-opacity="0.75" stroke-width="0.5" stroke-linejoin="round"/>
<polygon points="483.6,405.7 478.1,400.2 483.6,395.0 489.1,401.1" fill="#003bc4" stroke="#1a2a10" stroke-opacity="0.75" stroke-width="0.5" stroke-linejoin="round"/>
<polygon points="494.6,406.5 489.1,401.1 494.6,396.4 500.1,402.4" fill="#0039c6" stroke="#1a2a10" stroke-opacity="0.75" stroke-width="0.5" stroke-linejoin="round"/>
<polygon points="505.6,408.4 500.1,402.4 505.6,398.7 511.1,405.3" fill="#0030cf" stroke="#1a2a10" stroke-opacity="0.75" stroke-width="0.5" stroke-linejoin="round"/>
<polygon points="516.6,412.5 511.1,405.3 516.6,402.5 522.1,410.1" fill="#001be4" stroke="#1a2a10" stroke-opacity="0.75" stroke-width="0.5" stroke-linejoin="round"/>
<polygon points="527.6,417.8 522.1,410.1 527.7,407.7 533.2,415.7" fill="#0000ff" stroke="#1a2a10" stroke-opacity="0.75" stroke-width="0.5" stroke-linejoin="round"/>
<polygon points="434.0,400.6 428.5,393.1 434.0,389.7 439.5,397.7" fill="#005aa5" stroke="#1a2a10" stroke-opacity="0.75" stroke-width="0.5" stroke-linejoin="round"/>
<polygon points="445.0,404.3 439.5,397.7 445.0,394.3 450.5,401.0" fill="#0047b8" stroke="#1a2a10" stroke-opacity="0.75" stroke-width="0.5" stroke-linejoin="round"/>
<polygon points="456.0,407.8 450.5,401.0 456.0,397.2 461.5,404.1" fill="#0036c9" stroke="#1a2a10" stroke-opacity="0.75" stroke-width="0.5" stroke-linejoin="round"/>
<polygon points="467.0,408.7 461.5,404.1 467.1,399.8 472.6,404.9" fill="#0034cb" stroke="#1a2a10" stroke-opacity="0.75" stroke-width="0.5" stroke-linejoin="round"/>
<polygon points="478.1,409.9 472.6,404.9 478.1,400.2 483.6,405.7" fill="#002fd0" stroke="#1a2a10" stroke-opacity="0.75" stroke-width="0.5" stroke-linejoin="round"/>
<polygon points="489.1,410.6 483.6,405.7 489.1,401.1 494.6,406.5" fill="#002dd2" stroke="#1a2a10" stroke-opacity="0.75" stroke-width="0.5" stroke-linejoin="round"/>
<polygon points="500.1,411.9 494.6,406.5 500.1,402.4 505.6,408.4" fill="#0028d7" stroke="#1a2a10" stroke-opacity="0.75" stroke-width="0.5" stroke-linejoin="round"/>
<polygon points="511.1,415.1 505.6,408.4 511.1,405.3 516.6,412.5" fill="#0018e7" stroke="#1a2a10" stroke-opacity="0.75" stroke-width="0.5" stroke-linejoin="round"/>
<polygon points="522.1,419.8 516.6,412.5 522.1,410.1 527.6,417.8" fill="#0000ff" stroke="#1a2a10" stroke-opacity="0.75" stroke-width="0.5" stroke-linejoin="round"/>
<polygon points="439.5,407.2 434.0,400.6 439.5,397.7 445.0,404.3" fill="#0042bd" stroke="#1a2a10" stroke-opacity="0.75" stroke-width="0.5" stroke-linejoin="round"/>
<polygon points="450.5,411.0 445.0,404.3 450.5,401.0 456.0,407.8" fill="#002fd0" stroke="#1a2a10" stroke-opacity="0.75" stroke-width="0.5" stroke-linejoin="round"/>
<polygon points="461.5,411.9 456.0,407.8 461.5,404.1 467.0,408.7" fill="#002cd3" stroke="#1a2a10" stroke-opacity="0.75" stroke-width="0.5" stroke-linejoin="round"/>
<polygon points="472.5,413.2 467.0,408.7 472.6,404.9 478.1,409.9" fill="#0027d8" stroke="#1a2a10" stroke-opacity="0.75" stroke-width="0.5" stroke-linejoin="round"/>
<polygon points="483.6,414.2 478.1,409.9 483.6,405.7 489.1,410.6" fill="#0023dc" stroke="#1a2a10" stroke-opacity="0.75" stroke-width="0.5" stroke-linejoin="round"/>
<polygon points="494.6,415.4 489.1,410.6 494.6,406.5 500.1,411.9" fill="#001fe0" stroke="#1a2a10" stroke-opacity="0.75" stroke-width="0.5" stroke-linejoin="round"/>
<polygon points="505.6,417.8 500.1,411.9 505.6,408.4 511.1,415.1" fill="#0014eb" stroke="#1a2a10" stroke-opacity="0.75" stroke-width="0.5" stroke-linejoin="round"/>
<polygon points="516.6,421.7 511.1,415.1 516.6,412.5 522.1,419.8" fill="#0000ff" stroke="#1a2a10" stroke-opacity="0.75" stroke-width="0.5" stroke-linejoin="round"/>
<polygon points="445.0,413.7 439.5,407.2 445.0,404.3 450.5,411.0" fill="#0029d6" stroke="#1a2a10" stroke-opacity="0.75" stroke-width="0.5" stroke-linejoin="round"/>
<polygon points="456.0,414.7 450.5,411.0 456.0,407.8 461.5,411.9" fill="#0026d9" stroke="#1a2a10" stroke-opacity="0.75" stroke-width="0.5" stroke-linejoin="round"/>
<polygon points="467.0,416.0 461.5,411.9 467.0,408.7 472.5,413.2" fill="#0021de" stroke="#1a2a10" stroke-opacity="0.75" stroke-width="0.5" stroke-linejoin="round"/>
<polygon points="478.0,417.1 472.5,413.2 478.1,409.9 483.6,414.2" fill="#001de2" stroke="#1a2a10" stroke-opacity="0.75" stroke-width="0.5" stroke-linejoin="round"/>
<polygon points="489.1,418.5 483.6,414.2 489.1,410.6 494.6,415.4" fill="#0018e7" stroke="#1a2a10" stroke-opacity="0.75" stroke-width="0.5" stroke-linejoin="round"/>
<polygon points="500.1,420.4 494.6,415.4 500.1,411.9 505.6,417.8" fill="#000ff0" stroke="#1a2a10" stroke-opacity="0.75" stroke-width="0.5" stroke-linejoin="round"/>
<polygon points="511.1,423.6 505.6,417.8 511.1,415.1 516.6,421.7" fill="#0000ff" stroke="#1a2a10" stroke-opacity="0.75" stroke-width="0.5" stroke-linejoin="round"/>
<polygon points="450.5,417.1 445.0,413.7 450.5,411.0 456.0,414.7" fill="#0022dd" stroke="#1a2a10" stroke-opacity="0.75" stroke-width="0.5" stroke-linejoin="round"/>
<polygon points="461.5,418.4 456.0,414.7 461.5,411.9 467.0,416.0" fill="#001de2" stroke="#1a2a10" stroke-opacity="0.75" stroke-width="0.5" stroke-linejoin="round"/>
<polygon points="472.5,419.6 467.0,416.0 472.5,413.2 478.0,417.1" fill="#0019e6" stroke="#1a2a10" stroke-opacity="0.75" stroke-width="0.5" stroke-linejoin="round"/>
<polygon points="483.5,421.0 478.0,417.1 483.6,414.2 489.1,418.5" fill="#0013ec" stroke="#1a2a10" stroke-opacity="0.75" stroke-width="0.5" stroke-linejoin="round"/>
<polygon points="494.6,422.8 489.1,418.5 494.6,415.4 500.1,420.4" fill="#000cf3" stroke="#1a2a10" stroke-opacity="0.75" stroke-width="0.5" stroke-linejoin="round"/>
<polygon points="505.6,425.4 500.1,420.4 505.6,417.8 511.1,423.6" fill="#0000ff" stroke="#1a2a10" stroke-opacity="0.75" stroke-width="0.5" stroke-linejoin="round"/>
<polygon points="456.0,420.5 450.5,417.1 456.0,414.7 461.5,418.4" fill="#001ae5" stroke="#1a2a10" stroke-opacity="0.75" stroke-width="0.5" stroke-linejoin="round"/>
<polygon points="467.0,421.7 461.5,418.4 467.0,416.0 472.5,419.6" fill="#0016e9" stroke="#1a2a10" stroke-opacity="0.75" stroke-width="0.5" stroke-linejoin="round"/>
<polygon points="478.0,423.1 472.5,419.6 478.0,417.1 483.5,421.0" fill="#0011ee" stroke="#1a2a10" stroke-opacity="0.75" stroke-width="0.5" stroke-linejoin="round"/>
<polygon points="489.0,424.9 483.5,421.0 489.1,418.5 494.6,422.8" fill="#000af5" stroke="#1a2a10" stroke-opacity="0.75" stroke-width="0.5" stroke-linejoin="round"/>
<polygon points="500.1,427.2 494.6,422.8 500.1,420.4 505.6,425.4" fill="#0000ff" stroke="#1a2a10" stroke-opacity="0.75" stroke-width="0.5" stroke-linejoin="round"/>
<polygon points="461.5,423.6 456.0,420.5 461.5,418.4 467.0,421.7" fill="#0015ea" stroke="#1a2a10" stroke-opacity="0.75" stroke-width="0.5" stroke-linejoin="round"/>
<polygon points="472.5,425.0 467.0,421.7 472.5,419.6 478.0,423.1" fill="#0010ef" stroke="#1a2a10" stroke-opacity="0.75" stroke-width="0.5" stroke-linejoin="round"/>
<polygon points="483.5,426.8 478.0,423.1 483.5,421.0 489.0,424.9" fill="#0009f6" stroke="#1a2a10" stroke-opacity="0.75" stroke-width="0.5" stroke-linejoin="round"/>
<polygon points="494.5,428.9 489.0,424.9 494.6,422.8 500.1,427.2" fill="#0000ff" stroke="#1a2a10" stroke-opacity="0.75" stroke-width="0.5" stroke-linejoin="round"/>
<polygon points="467.0,426.7 461.5,423.6 467.0,421.7 472.5,425.0" fill="#000ff0" stroke="#1a2a10" stroke-opacity="0.75" stroke-width="0.5" stroke-linejoin="round"/>
<polygon points="478.0,428.5 472.5,425.0 478.0,423.1 483.5,426.8" fill="#0008f7" stroke="#1a2a10" stroke-opacity="0.75" stroke-width="0.5" stroke-linejoin="round"/>
<polygon points="489.0,430.5 483.5,426.8 489.0,424.9 494.5,428.9" fill="#0000ff" stroke="#1a2a10" stroke-opacity="0.75" stroke-width="0.5" stroke-linejoin="round"/>
<polygon points="472.5,430.1 467.0,426.7 472.5,425.0 478.0,428.5" fill="#0008f8" stroke="#1a2a10" stroke-opacity="0.75" stroke-width="0.5" stroke-linejoin="round"/>
<polygon points="483.5,432.0 478.0,428.5 483.5,426.8 489.0,430.5" fill="#0000ff" stroke="#1a2a10" stroke-opacity="0.75" stroke-width="0.5" stroke-linejoin="round"/>
<polygon points="478.0,433.5 472.5,430.1 478.0,428.5 483.5,432.0" fill="#0000ff" stroke="#1a2a10" stroke-opacity="0.75" stroke-width="0.5" stroke-linejoin="round"/>
<path d="M390.0,262.5L478.0,295.0L582.8,255.5M478.0,295.0L478.0,433.5" stroke="#b8b8a0" stroke-opacity="0.8" stroke-width="0.75" fill="none"/>
</g>
<text x="591.7" y="240.09" font-family="Liberation Sans" font-size="5.25" fill="#e8e830">Положение ДЗ (%)</text>
<text x="592.3" y="258.49" font-family="Liberation Sans" font-size="5.25" fill="#f4f4f4">100,00</text>
<text x="592.3" y="265.82" font-family="Liberation Sans" font-size="5.25" fill="#f4f4f4">94,74</text>
<text x="592.3" y="273.14" font-family="Liberation Sans" font-size="5.25" fill="#f4f4f4">89,47</text>
<text x="592.3" y="280.47" font-family="Liberation Sans" font-size="5.25" fill="#f4f4f4">84,21</text>
<text x="592.3" y="287.79" font-family="Liberation Sans" font-size="5.25" fill="#f4f4f4">78,95</text>
<text x="592.3" y="295.12" font-family="Liberation Sans" font-size="5.25" fill="#f4f4f4">73,68</text>
<text x="592.3" y="302.45" font-family="Liberation Sans" font-size="5.25" fill="#f4f4f4">68,42</text>
<text x="592.3" y="309.77" font-family="Liberation Sans" font-size="5.25" fill="#f4f4f4">63,16</text>
<text x="592.3" y="317.10" font-family="Liberation Sans" font-size="5.25" fill="#f4f4f4">57,89</text>
<text x="592.3" y="324.42" font-family="Liberation Sans" font-size="5.25" fill="#f4f4f4">52,63</text>
<text x="592.3" y="331.75" font-family="Liberation Sans" font-size="5.25" fill="#f4f4f4">47,37</text>
<text x="592.3" y="339.08" font-family="Liberation Sans" font-size="5.25" fill="#f4f4f4">42,11</text>
<text x="592.3" y="346.40" font-family="Liberation Sans" font-size="5.25" fill="#f4f4f4">36,84</text>
<text x="592.3" y="353.73" font-family="Liberation Sans" font-size="5.25" fill="#f4f4f4">31,58</text>
<text x="592.3" y="361.05" font-family="Liberation Sans" font-size="5.25" fill="#f4f4f4">26,32</text>
<text x="592.3" y="368.38" font-family="Liberation Sans" font-size="5.25" fill="#f4f4f4">21,05</text>
<text x="592.3" y="375.71" font-family="Liberation Sans" font-size="5.25" fill="#f4f4f4">15,79</text>
<text x="592.3" y="383.03" font-family="Liberation Sans" font-size="5.25" fill="#f4f4f4">10,53</text>
<text x="592.3" y="390.36" font-family="Liberation Sans" font-size="5.25" fill="#f4f4f4">5,26</text>
<text x="592.3" y="397.68" font-family="Liberation Sans" font-size="5.25" fill="#f4f4f4">0,00</text>
<text x="383.8" y="415.59" font-family="Liberation Sans" font-size="5.25" fill="#f4f4f4">93,75</text>
<text x="404.6" y="420.39" font-family="Liberation Sans" font-size="5.25" fill="#f4f4f4">75</text>
<text x="416.8" y="426.49" font-family="Liberation Sans" font-size="5.25" fill="#f4f4f4">56,25</text>
<text x="434.3" y="432.29" font-family="Liberation Sans" font-size="5.25" fill="#f4f4f4">37,5</text>
<text x="450.2" y="438.09" font-family="Liberation Sans" font-size="5.25" fill="#f4f4f4">18,75</text>
<text x="471" y="442.59" font-family="Liberation Sans" font-size="5.25" fill="#f4f4f4">0</text>
<text x="480.6" y="443.29" font-family="Liberation Sans" font-size="5.25" fill="#f4f4f4">600</text>
<text x="506.2" y="434.09" font-family="Liberation Sans" font-size="5.25" fill="#f4f4f4">2126,32</text>
<text x="533.5" y="425.49" font-family="Liberation Sans" font-size="5.25" fill="#f4f4f4">3652,63</text>
<text x="560.9" y="415.89" font-family="Liberation Sans" font-size="5.25" fill="#f4f4f4">5178,95</text>
<text x="397.8" y="440.69" font-family="Liberation Sans" font-size="5.25" fill="#e8e830">Нагрузка (%)</text>
<text x="541.1" y="438.19" font-family="Liberation Sans" font-size="5.25" fill="#e8e830">Обороты (об/мин)</text>
</svg>
</body></html>
